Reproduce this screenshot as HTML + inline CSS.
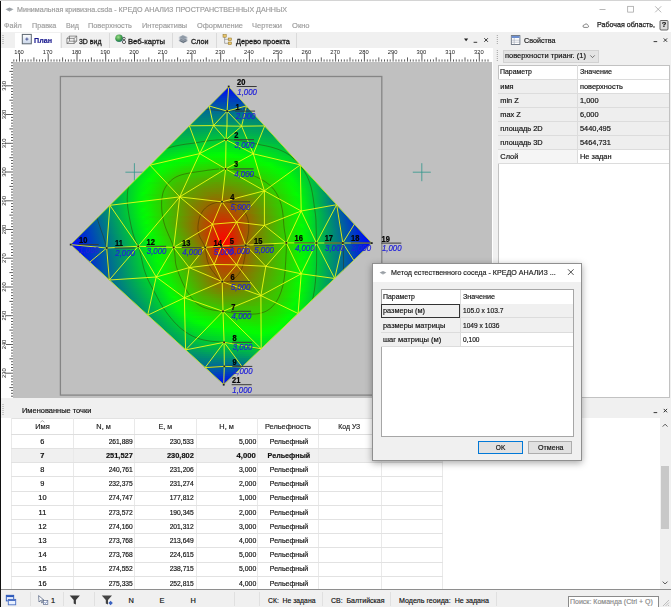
<!DOCTYPE html>
<html><head><meta charset="utf-8"><title>КРЕДО АНАЛИЗ ПРОСТРАНСТВЕННЫХ ДАННЫХ</title>
<style>
html,body{margin:0;padding:0;}
body{width:671px;height:607px;overflow:hidden;background:#fff;position:relative;font-family:"Liberation Sans", sans-serif;}
.b{position:absolute;box-sizing:border-box;}
.t{position:absolute;white-space:pre;line-height:10px;font-family:"Liberation Sans", sans-serif;}
svg{position:absolute;left:0;top:0;overflow:visible;}
#w{position:absolute;left:0;top:0;width:671px;height:607px;overflow:hidden;filter:blur(0.3px);}
</style></head><body><div id="w">
<div class="b" style="left:0px;top:0px;width:671px;height:1px;background:#d4d4d4;"></div>
<span class="t " style="left:17.0px;top:4.6px;font-size:7.7px;color:#9b9b9b;transform:scaleX(0.926);transform-origin:left center;-webkit-text-stroke:0.18px #9b9b9b;">Минимальная кривизна.csda - КРЕДО АНАЛИЗ ПРОСТРАНСТВЕННЫХ ДАННЫХ</span>
<svg width="671" height="607"><path d="M5.5 9.2 L9.5 7.6 L13.5 9.2 L9.5 10.8 Z" fill="#9aa0a6"/><path d="M5.5 9.2 L9.5 10.8 L13.5 9.2 L9.5 11.6 Z" fill="#7d858c"/></svg>
<svg width="671" height="607" stroke="#9a9a9a" stroke-width="0.7" fill="none"><path d="M599.5 9.5h6"/><rect x="627.7" y="6.3" width="5.8" height="5.8"/><path d="M655.2 6.3l6 6M661.2 6.3l-6 6"/></svg>
<span class="t " style="left:4.2px;top:21.0px;font-size:7.7px;color:#9d9d9d;transform:scaleX(0.940);transform-origin:left center;-webkit-text-stroke:0.18px #9d9d9d;">Файл</span>
<span class="t " style="left:32.0px;top:21.0px;font-size:7.7px;color:#9d9d9d;transform:scaleX(0.934);transform-origin:left center;-webkit-text-stroke:0.18px #9d9d9d;">Правка</span>
<span class="t " style="left:66.0px;top:21.0px;font-size:7.7px;color:#9d9d9d;transform:scaleX(0.933);transform-origin:left center;-webkit-text-stroke:0.18px #9d9d9d;">Вид</span>
<span class="t " style="left:88.3px;top:21.0px;font-size:7.7px;color:#9d9d9d;transform:scaleX(0.955);transform-origin:left center;-webkit-text-stroke:0.18px #9d9d9d;">Поверхность</span>
<span class="t " style="left:142.2px;top:21.0px;font-size:7.7px;color:#9d9d9d;transform:scaleX(0.962);transform-origin:left center;-webkit-text-stroke:0.18px #9d9d9d;">Интерактивы</span>
<span class="t " style="left:197.0px;top:21.0px;font-size:7.7px;color:#9d9d9d;transform:scaleX(0.962);transform-origin:left center;-webkit-text-stroke:0.18px #9d9d9d;">Оформление</span>
<span class="t " style="left:252.4px;top:21.0px;font-size:7.7px;color:#9d9d9d;transform:scaleX(0.977);transform-origin:left center;-webkit-text-stroke:0.18px #9d9d9d;">Чертежи</span>
<span class="t " style="left:292.0px;top:21.0px;font-size:7.7px;color:#9d9d9d;transform:scaleX(0.983);transform-origin:left center;-webkit-text-stroke:0.18px #9d9d9d;">Окно</span>
<span class="t " style="left:597.0px;top:20.4px;font-size:7.7px;color:#1a1a1a;transform:scaleX(0.921);transform-origin:left center;-webkit-text-stroke:0.25px #1a1a1a;">Рабочая область,</span>
<svg width="671" height="607"><path d="M584 27.400h3.800a1.100 1.100 0 0 0 0-2.100a1.800 1.800 0 0 0-3.400-.3a1.200 1.200 0 0 0-.4 2.400z" fill="none" stroke="#555" stroke-width="0.7"/><rect x="660" y="20.5" width="8" height="9.5" rx="1" fill="#dcdcdc" stroke="#444" stroke-width="0.8"/></svg>
<span class="t " style="left:661.7px;top:20.4px;font-size:7.5px;color:#111;-webkit-text-stroke:0.18px #111;font-weight:700;">?</span>
<div class="b" style="left:1px;top:32px;width:491.6px;height:15.6px;background:#f0f0f0;"></div>
<div class="b" style="left:14.8px;top:32.6px;width:45.6px;height:15px;background:#fff;"></div>
<svg width="671" height="607"><path d="M3 35v10" stroke="#9a9a9a" stroke-width="1" stroke-dasharray="1 1"/></svg>
<span class="t " style="left:34.0px;top:36.4px;font-size:7.7px;color:#1b1b8f;transform:scaleX(0.930);transform-origin:left center;-webkit-text-stroke:0.18px #1b1b8f;font-weight:700;">План</span>
<span class="t " style="left:79.0px;top:36.6px;font-size:7.7px;color:#1a1a1a;transform:scaleX(0.905);transform-origin:left center;-webkit-text-stroke:0.3px #1a1a1a;">3D вид</span>
<span class="t " style="left:128.0px;top:36.6px;font-size:7.7px;color:#1a1a1a;transform:scaleX(0.992);transform-origin:left center;-webkit-text-stroke:0.3px #1a1a1a;">Веб-карты</span>
<span class="t " style="left:191.3px;top:36.6px;font-size:7.7px;color:#1a1a1a;transform:scaleX(0.934);transform-origin:left center;-webkit-text-stroke:0.3px #1a1a1a;">Слои</span>
<span class="t " style="left:236.0px;top:36.6px;font-size:7.7px;color:#1a1a1a;transform:scaleX(0.953);transform-origin:left center;-webkit-text-stroke:0.3px #1a1a1a;">Дерево проекта</span>
<div class="b" style="left:60.6px;top:33px;width:0.8px;height:14.5px;background:#dadada;"></div>
<div class="b" style="left:108.6px;top:33px;width:0.8px;height:14.5px;background:#dadada;"></div>
<div class="b" style="left:172px;top:33px;width:0.8px;height:14.5px;background:#dadada;"></div>
<div class="b" style="left:216px;top:33px;width:0.8px;height:14.5px;background:#dadada;"></div>
<div class="b" style="left:295.5px;top:33px;width:0.8px;height:14.5px;background:#dadada;"></div>
<svg width="671" height="607">
<defs><linearGradient id="pl" x1="0" y1="0" x2="0" y2="1"><stop offset="0" stop-color="#fff"/><stop offset="1" stop-color="#c9d6ea"/></linearGradient>
<radialGradient id="gl" cx="0.4" cy="0.35" r="0.7"><stop offset="0" stop-color="#9fe08a"/><stop offset="0.6" stop-color="#3d9a4a"/><stop offset="1" stop-color="#2b6f7a"/></radialGradient></defs>
<rect x="22.3" y="34.4" width="9" height="9.4" fill="url(#pl)" stroke="#5c6670" stroke-width="1"/>
<path d="M25.3 39.100h3.200M26.900 37.500v3.200" stroke="#33408a" stroke-width="0.8"/>
<g fill="none" stroke="#505050" stroke-width="0.6"><path d="M66.900 38.400h7.200v5.100h-7.200zM69.500 36.100h7.200v5.100h-7.200zM66.900 38.400l2.600-2.300M74.100 38.400l2.600-2.300M66.900 43.500l2.600-2.300M74.100 43.500l2.600-2.300"/></g>
<circle cx="119.100" cy="38.300" r="3.800" fill="url(#gl)"/>
<circle cx="124" cy="38.500" r="1.200" fill="#fff" stroke="#222" stroke-width="0.700"/><circle cx="124" cy="42" r="1.600" fill="#fff" stroke="#222" stroke-width="0.700"/>
<g stroke="#e8ecf0" stroke-width="0.3"><path d="M178.600 40.800l4.300-2.200 5 2.200-4.600 2.400z" fill="#5f6b78"/><path d="M178.600 39l4.300-2.200 5 2.200-4.600 2.400z" fill="#7a8592"/><path d="M178.600 37.200l4.300-2.200 5 2.200-4.600 2.400z" fill="#8f9aa6"/></g>
<g><rect x="223" y="34.6" width="3.2" height="2.6" fill="#e9c66a" stroke="#8a6d1c" stroke-width="0.5"/><rect x="228.2" y="38" width="3.2" height="2.6" fill="#e9c66a" stroke="#8a6d1c" stroke-width="0.5"/><rect x="228.2" y="42" width="3.2" height="2.6" fill="#e9c66a" stroke="#8a6d1c" stroke-width="0.5"/><path d="M224.6 37.2v6.1h3.6M224.6 39.3h3.6" fill="none" stroke="#666" stroke-width="0.5"/></g>
</svg>
<svg width="671" height="607"><path d="M464 38.6h4.2l-2.1 2.6z" fill="#222"/><path d="M473.6 42.3h3.6" stroke="#222" stroke-width="0.9"/><path d="M484.3 38.2l3.6 3.6M487.9 38.2l-3.6 3.6" stroke="#222" stroke-width="0.9"/></svg>
<div class="b" style="left:492.6px;top:32px;width:178.4px;height:366px;background:#f0f0f0;"></div>
<svg width="671" height="607"><path d="M497.300 35v10M497.300 50v12" stroke="#a0a0a0" stroke-width="1" stroke-dasharray="1 1"/></svg>
<svg width="671" height="607"><rect x="511.3" y="35.6" width="8.6" height="8.8" fill="#fff" stroke="#56606e" stroke-width="0.8"/><rect x="511.7" y="36" width="7.8" height="2" fill="#6d8fd0"/><path d="M514.2 38v6.2M511.5 40.2h8.2M511.5 42.2h8.2" stroke="#8e98a8" stroke-width="0.5"/></svg>
<span class="t " style="left:524.0px;top:35.6px;font-size:7.7px;color:#111;transform:scaleX(0.932);transform-origin:left center;-webkit-text-stroke:0.18px #111;">Свойства</span>
<svg width="671" height="607"><path d="M653.6 41.6h3.6" stroke="#222" stroke-width="0.9"/><path d="M663.7 38.4l3.4 3.4M667.1 38.4l-3.400 3.4" stroke="#222" stroke-width="0.9"/></svg>
<div class="b" style="left:502.7px;top:49.6px;width:96.5px;height:13.6px;background:#e4e4e4;border:0.8px solid #d2d2d2;"></div>
<span class="t " style="left:505.4px;top:51.4px;font-size:7.7px;color:#111;transform:scaleX(0.972);transform-origin:left center;-webkit-text-stroke:0.18px #111;">поверхности трианг. (1)</span>
<svg width="671" height="607"><path d="M590.3 55.4l2.2 2.2l2.2-2.2" fill="none" stroke="#444" stroke-width="0.7"/></svg>
<div class="b" style="left:497.5px;top:64.6px;width:172px;height:333px;background:#fff;border:0.8px solid #c2c2c2;"></div>
<span class="t " style="left:500.3px;top:67.4px;font-size:7.7px;color:#111;transform:scaleX(0.901);transform-origin:left center;-webkit-text-stroke:0.18px #111;">Параметр</span>
<span class="t " style="left:580.0px;top:67.4px;font-size:7.7px;color:#111;transform:scaleX(0.937);transform-origin:left center;-webkit-text-stroke:0.18px #111;">Значение</span>
<div class="b" style="left:498.3px;top:79px;width:170.4px;height:0.8px;background:#dcdcdc;"></div>
<div class="b" style="left:498.3px;top:79.6px;width:78.7px;height:14.0px;background:#eeeeee;"></div>
<div class="b" style="left:498.3px;top:93.1px;width:170.4px;height:0.7px;background:#dcdcdc;"></div>
<span class="t " style="left:500.3px;top:81.7px;font-size:7.4px;color:#111;-webkit-text-stroke:0.18px #111;">имя</span>
<span class="t " style="left:580.0px;top:81.7px;font-size:7.4px;color:#111;-webkit-text-stroke:0.18px #111;">поверхность</span>
<div class="b" style="left:498.3px;top:93.6px;width:78.7px;height:14.0px;background:#eeeeee;"></div>
<div class="b" style="left:577.6px;top:93.6px;width:91px;height:14.0px;background:#eeeeee;"></div>
<div class="b" style="left:498.3px;top:107.1px;width:170.4px;height:0.7px;background:#dcdcdc;"></div>
<span class="t " style="left:500.3px;top:95.7px;font-size:7.4px;color:#111;-webkit-text-stroke:0.18px #111;">min Z</span>
<span class="t " style="left:580.0px;top:95.7px;font-size:7.4px;color:#111;-webkit-text-stroke:0.18px #111;">1,000</span>
<div class="b" style="left:498.3px;top:107.6px;width:78.7px;height:14.0px;background:#eeeeee;"></div>
<div class="b" style="left:577.6px;top:107.6px;width:91px;height:14.0px;background:#eeeeee;"></div>
<div class="b" style="left:498.3px;top:121.1px;width:170.4px;height:0.7px;background:#dcdcdc;"></div>
<span class="t " style="left:500.3px;top:109.7px;font-size:7.4px;color:#111;-webkit-text-stroke:0.18px #111;">max Z</span>
<span class="t " style="left:580.0px;top:109.7px;font-size:7.4px;color:#111;-webkit-text-stroke:0.18px #111;">6,000</span>
<div class="b" style="left:498.3px;top:121.6px;width:78.7px;height:14.0px;background:#eeeeee;"></div>
<div class="b" style="left:577.6px;top:121.6px;width:91px;height:14.0px;background:#eeeeee;"></div>
<div class="b" style="left:498.3px;top:135.1px;width:170.4px;height:0.7px;background:#dcdcdc;"></div>
<span class="t " style="left:500.3px;top:123.7px;font-size:7.4px;color:#111;-webkit-text-stroke:0.18px #111;">площадь 2D</span>
<span class="t " style="left:580.0px;top:123.7px;font-size:7.4px;color:#111;-webkit-text-stroke:0.18px #111;">5440,495</span>
<div class="b" style="left:498.3px;top:135.6px;width:78.7px;height:14.0px;background:#eeeeee;"></div>
<div class="b" style="left:577.6px;top:135.6px;width:91px;height:14.0px;background:#eeeeee;"></div>
<div class="b" style="left:498.3px;top:149.1px;width:170.4px;height:0.7px;background:#dcdcdc;"></div>
<span class="t " style="left:500.3px;top:137.7px;font-size:7.4px;color:#111;-webkit-text-stroke:0.18px #111;">площадь 3D</span>
<span class="t " style="left:580.0px;top:137.7px;font-size:7.4px;color:#111;-webkit-text-stroke:0.18px #111;">5464,731</span>
<div class="b" style="left:498.3px;top:149.6px;width:78.7px;height:14.0px;background:#f5f5f5;"></div>
<div class="b" style="left:498.3px;top:163.1px;width:170.4px;height:0.7px;background:#dcdcdc;"></div>
<span class="t " style="left:500.3px;top:151.7px;font-size:7.4px;color:#111;-webkit-text-stroke:0.18px #111;">Слой</span>
<span class="t " style="left:580.0px;top:151.7px;font-size:7.4px;color:#111;-webkit-text-stroke:0.18px #111;">Не задан</span>
<div class="b" style="left:577px;top:65.4px;width:0.8px;height:98.2px;background:#dcdcdc;"></div>
<div class="b" style="left:1px;top:397.6px;width:670px;height:21px;background:#f0f0f0;"></div>
<div class="b" style="left:1px;top:418.2px;width:670px;height:171.2px;background:#fff;"></div>
<svg width="671" height="607"><path d="M3 404v12" stroke="#a0a0a0" stroke-width="1" stroke-dasharray="1 1"/></svg>
<span class="t " style="left:21.8px;top:405.8px;font-size:7.7px;color:#111;transform:scaleX(0.970);transform-origin:left center;-webkit-text-stroke:0.18px #111;">Именованные точки</span>
<svg width="671" height="607"><path d="M653.6 412.6h3.6" stroke="#222" stroke-width="0.9"/><path d="M663.7 408.9l3.4 3.4M667.1 408.9l-3.400 3.4" stroke="#222" stroke-width="0.9"/></svg>
<div class="b" style="left:11.2px;top:418.3px;width:431.5px;height:0.8px;background:#e2e2e2;"></div>
<div class="b" style="left:11.6px;top:448.4px;width:430.6px;height:14.2px;background:#f0f0f0;"></div>
<div class="b" style="left:11.2px;top:418.3px;width:0.8px;height:171.2px;background:#e9e9e9;"></div>
<div class="b" style="left:72.8px;top:418.3px;width:0.8px;height:171.2px;background:#e9e9e9;"></div>
<div class="b" style="left:134.2px;top:418.3px;width:0.8px;height:171.2px;background:#e9e9e9;"></div>
<div class="b" style="left:195.6px;top:418.3px;width:0.8px;height:171.2px;background:#e9e9e9;"></div>
<div class="b" style="left:256.6px;top:418.3px;width:0.8px;height:171.2px;background:#e9e9e9;"></div>
<div class="b" style="left:318px;top:418.3px;width:0.8px;height:171.2px;background:#e9e9e9;"></div>
<div class="b" style="left:380.6px;top:418.3px;width:0.8px;height:171.2px;background:#e9e9e9;"></div>
<div class="b" style="left:442.2px;top:418.3px;width:0.8px;height:171.2px;background:#e9e9e9;"></div>
<div class="b" style="left:11.2px;top:433.8px;width:431.5px;height:0.8px;background:#dedede;"></div>
<div class="b" style="left:11.2px;top:448.0px;width:431.5px;height:0.8px;background:#e2e2e2;"></div>
<div class="b" style="left:11.2px;top:462.2px;width:431.5px;height:0.8px;background:#e2e2e2;"></div>
<div class="b" style="left:11.2px;top:476.4px;width:431.5px;height:0.8px;background:#e2e2e2;"></div>
<div class="b" style="left:11.2px;top:490.6px;width:431.5px;height:0.8px;background:#e2e2e2;"></div>
<div class="b" style="left:11.2px;top:504.8px;width:431.5px;height:0.8px;background:#e2e2e2;"></div>
<div class="b" style="left:11.2px;top:519.0px;width:431.5px;height:0.8px;background:#e2e2e2;"></div>
<div class="b" style="left:11.2px;top:533.2px;width:431.5px;height:0.8px;background:#e2e2e2;"></div>
<div class="b" style="left:11.2px;top:547.4px;width:431.5px;height:0.8px;background:#e2e2e2;"></div>
<div class="b" style="left:11.2px;top:561.6px;width:431.5px;height:0.8px;background:#e2e2e2;"></div>
<div class="b" style="left:11.2px;top:575.8000000000001px;width:431.5px;height:0.8px;background:#e2e2e2;"></div>
<span class="t " style="left:34.7px;top:422.3px;font-size:7.7px;color:#222;transform:scaleX(0.966);transform-origin:center center;-webkit-text-stroke:0.18px #222;">Имя</span>
<span class="t " style="left:95.9px;top:422.3px;font-size:7.7px;color:#222;transform:scaleX(0.958);transform-origin:center center;-webkit-text-stroke:0.18px #222;">N, м</span>
<span class="t " style="left:157.6px;top:422.3px;font-size:7.7px;color:#222;transform:scaleX(0.918);transform-origin:center center;-webkit-text-stroke:0.18px #222;">E, м</span>
<span class="t " style="left:218.9px;top:422.3px;font-size:7.7px;color:#222;transform:scaleX(0.958);transform-origin:center center;-webkit-text-stroke:0.18px #222;">H, м</span>
<span class="t " style="left:263.5px;top:422.3px;font-size:7.7px;color:#222;transform:scaleX(0.961);transform-origin:center center;-webkit-text-stroke:0.18px #222;">Рельефность</span>
<span class="t " style="left:337.0px;top:422.3px;font-size:7.7px;color:#222;transform:scaleX(0.894);transform-origin:center center;-webkit-text-stroke:0.18px #222;">Код УЗ</span>
<svg width="671" height="607"><path d="M40.4 422.2l2-1.6l2 1.6" fill="none" stroke="#777" stroke-width="0.6"/></svg>
<span class="t " style="left:40.3px;top:436.5px;font-size:7.4px;color:#111;-webkit-text-stroke:0.18px #111;">6</span>
<span class="t " style="left:104.6px;top:436.5px;font-size:7.7px;color:#111;transform:scaleX(0.869);transform-origin:right center;-webkit-text-stroke:0.18px #111;">261,889</span>
<span class="t " style="left:166.2px;top:436.5px;font-size:7.7px;color:#111;transform:scaleX(0.869);transform-origin:right center;-webkit-text-stroke:0.18px #111;">230,533</span>
<span class="t " style="left:236.5px;top:436.5px;font-size:7.7px;color:#111;transform:scaleX(0.898);transform-origin:right center;-webkit-text-stroke:0.18px #111;">5,000</span>
<span class="t " style="left:267.5px;top:436.5px;font-size:7.7px;color:#111;transform:scaleX(0.916);transform-origin:center center;-webkit-text-stroke:0.18px #111;">Рельефный</span>
<span class="t " style="left:40.3px;top:450.7px;font-size:7.4px;color:#111;-webkit-text-stroke:0.18px #111;font-weight:700;">7</span>
<span class="t " style="left:104.6px;top:450.7px;font-size:7.7px;color:#111;transform:scaleX(0.965);transform-origin:right center;-webkit-text-stroke:0.18px #111;font-weight:700;">251,527</span>
<span class="t " style="left:166.2px;top:450.7px;font-size:7.7px;color:#111;transform:scaleX(0.965);transform-origin:right center;-webkit-text-stroke:0.18px #111;font-weight:700;">230,802</span>
<span class="t " style="left:236.5px;top:450.7px;font-size:7.7px;color:#111;-webkit-text-stroke:0.18px #111;font-weight:700;">4,000</span>
<span class="t " style="left:265.6px;top:450.7px;font-size:7.7px;color:#111;transform:scaleX(0.932);transform-origin:center center;-webkit-text-stroke:0.18px #111;font-weight:700;">Рельефный</span>
<span class="t " style="left:40.3px;top:464.9px;font-size:7.4px;color:#111;-webkit-text-stroke:0.18px #111;">8</span>
<span class="t " style="left:104.6px;top:464.9px;font-size:7.7px;color:#111;transform:scaleX(0.869);transform-origin:right center;-webkit-text-stroke:0.18px #111;">240,761</span>
<span class="t " style="left:166.2px;top:464.9px;font-size:7.7px;color:#111;transform:scaleX(0.869);transform-origin:right center;-webkit-text-stroke:0.18px #111;">231,206</span>
<span class="t " style="left:236.5px;top:464.9px;font-size:7.7px;color:#111;transform:scaleX(0.898);transform-origin:right center;-webkit-text-stroke:0.18px #111;">3,000</span>
<span class="t " style="left:267.5px;top:464.9px;font-size:7.7px;color:#111;transform:scaleX(0.916);transform-origin:center center;-webkit-text-stroke:0.18px #111;">Рельефный</span>
<span class="t " style="left:40.3px;top:479.1px;font-size:7.4px;color:#111;-webkit-text-stroke:0.18px #111;">9</span>
<span class="t " style="left:104.6px;top:479.1px;font-size:7.7px;color:#111;transform:scaleX(0.869);transform-origin:right center;-webkit-text-stroke:0.18px #111;">232,375</span>
<span class="t " style="left:166.2px;top:479.1px;font-size:7.7px;color:#111;transform:scaleX(0.869);transform-origin:right center;-webkit-text-stroke:0.18px #111;">231,274</span>
<span class="t " style="left:236.5px;top:479.1px;font-size:7.7px;color:#111;transform:scaleX(0.898);transform-origin:right center;-webkit-text-stroke:0.18px #111;">2,000</span>
<span class="t " style="left:267.5px;top:479.1px;font-size:7.7px;color:#111;transform:scaleX(0.916);transform-origin:center center;-webkit-text-stroke:0.18px #111;">Рельефный</span>
<span class="t " style="left:38.3px;top:493.3px;font-size:7.4px;color:#111;-webkit-text-stroke:0.18px #111;">10</span>
<span class="t " style="left:104.6px;top:493.3px;font-size:7.7px;color:#111;transform:scaleX(0.869);transform-origin:right center;-webkit-text-stroke:0.18px #111;">274,747</span>
<span class="t " style="left:166.2px;top:493.3px;font-size:7.7px;color:#111;transform:scaleX(0.869);transform-origin:right center;-webkit-text-stroke:0.18px #111;">177,812</span>
<span class="t " style="left:236.5px;top:493.3px;font-size:7.7px;color:#111;transform:scaleX(0.898);transform-origin:right center;-webkit-text-stroke:0.18px #111;">1,000</span>
<span class="t " style="left:267.5px;top:493.3px;font-size:7.7px;color:#111;transform:scaleX(0.916);transform-origin:center center;-webkit-text-stroke:0.18px #111;">Рельефный</span>
<span class="t " style="left:38.6px;top:507.5px;font-size:7.4px;color:#111;-webkit-text-stroke:0.18px #111;">11</span>
<span class="t " style="left:104.6px;top:507.5px;font-size:7.7px;color:#111;transform:scaleX(0.869);transform-origin:right center;-webkit-text-stroke:0.18px #111;">273,572</span>
<span class="t " style="left:166.2px;top:507.5px;font-size:7.7px;color:#111;transform:scaleX(0.869);transform-origin:right center;-webkit-text-stroke:0.18px #111;">190,345</span>
<span class="t " style="left:236.5px;top:507.5px;font-size:7.7px;color:#111;transform:scaleX(0.898);transform-origin:right center;-webkit-text-stroke:0.18px #111;">2,000</span>
<span class="t " style="left:267.5px;top:507.5px;font-size:7.7px;color:#111;transform:scaleX(0.916);transform-origin:center center;-webkit-text-stroke:0.18px #111;">Рельефный</span>
<span class="t " style="left:38.3px;top:521.7px;font-size:7.4px;color:#111;-webkit-text-stroke:0.18px #111;">12</span>
<span class="t " style="left:104.6px;top:521.7px;font-size:7.7px;color:#111;transform:scaleX(0.869);transform-origin:right center;-webkit-text-stroke:0.18px #111;">274,160</span>
<span class="t " style="left:166.2px;top:521.7px;font-size:7.7px;color:#111;transform:scaleX(0.869);transform-origin:right center;-webkit-text-stroke:0.18px #111;">201,312</span>
<span class="t " style="left:236.5px;top:521.7px;font-size:7.7px;color:#111;transform:scaleX(0.898);transform-origin:right center;-webkit-text-stroke:0.18px #111;">3,000</span>
<span class="t " style="left:267.5px;top:521.7px;font-size:7.7px;color:#111;transform:scaleX(0.916);transform-origin:center center;-webkit-text-stroke:0.18px #111;">Рельефный</span>
<span class="t " style="left:38.3px;top:535.9px;font-size:7.4px;color:#111;-webkit-text-stroke:0.18px #111;">13</span>
<span class="t " style="left:104.6px;top:535.9px;font-size:7.7px;color:#111;transform:scaleX(0.869);transform-origin:right center;-webkit-text-stroke:0.18px #111;">273,768</span>
<span class="t " style="left:166.2px;top:535.9px;font-size:7.7px;color:#111;transform:scaleX(0.869);transform-origin:right center;-webkit-text-stroke:0.18px #111;">213,649</span>
<span class="t " style="left:236.5px;top:535.9px;font-size:7.7px;color:#111;transform:scaleX(0.898);transform-origin:right center;-webkit-text-stroke:0.18px #111;">4,000</span>
<span class="t " style="left:267.5px;top:535.9px;font-size:7.7px;color:#111;transform:scaleX(0.916);transform-origin:center center;-webkit-text-stroke:0.18px #111;">Рельефный</span>
<span class="t " style="left:38.3px;top:550.1px;font-size:7.4px;color:#111;-webkit-text-stroke:0.18px #111;">14</span>
<span class="t " style="left:104.6px;top:550.1px;font-size:7.7px;color:#111;transform:scaleX(0.869);transform-origin:right center;-webkit-text-stroke:0.18px #111;">273,768</span>
<span class="t " style="left:166.2px;top:550.1px;font-size:7.7px;color:#111;transform:scaleX(0.869);transform-origin:right center;-webkit-text-stroke:0.18px #111;">224,615</span>
<span class="t " style="left:236.5px;top:550.1px;font-size:7.7px;color:#111;transform:scaleX(0.898);transform-origin:right center;-webkit-text-stroke:0.18px #111;">5,000</span>
<span class="t " style="left:267.5px;top:550.1px;font-size:7.7px;color:#111;transform:scaleX(0.916);transform-origin:center center;-webkit-text-stroke:0.18px #111;">Рельефный</span>
<span class="t " style="left:38.3px;top:564.3px;font-size:7.4px;color:#111;-webkit-text-stroke:0.18px #111;">15</span>
<span class="t " style="left:104.6px;top:564.3px;font-size:7.7px;color:#111;transform:scaleX(0.869);transform-origin:right center;-webkit-text-stroke:0.18px #111;">274,552</span>
<span class="t " style="left:166.2px;top:564.3px;font-size:7.7px;color:#111;transform:scaleX(0.869);transform-origin:right center;-webkit-text-stroke:0.18px #111;">238,715</span>
<span class="t " style="left:236.5px;top:564.3px;font-size:7.7px;color:#111;transform:scaleX(0.898);transform-origin:right center;-webkit-text-stroke:0.18px #111;">5,000</span>
<span class="t " style="left:267.5px;top:564.3px;font-size:7.7px;color:#111;transform:scaleX(0.916);transform-origin:center center;-webkit-text-stroke:0.18px #111;">Рельефный</span>
<span class="t " style="left:38.3px;top:578.5px;font-size:7.4px;color:#111;-webkit-text-stroke:0.18px #111;">16</span>
<span class="t " style="left:104.6px;top:578.5px;font-size:7.7px;color:#111;transform:scaleX(0.869);transform-origin:right center;-webkit-text-stroke:0.18px #111;">275,335</span>
<span class="t " style="left:166.2px;top:578.5px;font-size:7.7px;color:#111;transform:scaleX(0.869);transform-origin:right center;-webkit-text-stroke:0.18px #111;">252,815</span>
<span class="t " style="left:236.5px;top:578.5px;font-size:7.7px;color:#111;transform:scaleX(0.898);transform-origin:right center;-webkit-text-stroke:0.18px #111;">4,000</span>
<span class="t " style="left:267.5px;top:578.5px;font-size:7.7px;color:#111;transform:scaleX(0.916);transform-origin:center center;-webkit-text-stroke:0.18px #111;">Рельефный</span>
<div class="b" style="left:659.6px;top:418.3px;width:11px;height:171.2px;background:#f0f0f0;"></div>
<div class="b" style="left:661px;top:466.4px;width:8px;height:63px;background:#c8c8c8;"></div>
<svg width="671" height="607"><path d="M662.7 426.6l2.4-2.4l2.4 2.4M662.7 581.6l2.4 2.4l2.4-2.4" fill="none" stroke="#444" stroke-width="0.9"/></svg>
<div class="b" style="left:1px;top:589px;width:670px;height:0.9px;background:#8e8e8e;"></div>
<div class="b" style="left:1px;top:589.9px;width:670px;height:17.1px;background:#f0f0f0;"></div>
<div class="b" style="left:29.6px;top:592px;width:0.8px;height:14px;background:#e0e0e0;"></div>
<div class="b" style="left:63px;top:592px;width:0.8px;height:14px;background:#e0e0e0;"></div>
<div class="b" style="left:94px;top:592px;width:0.8px;height:14px;background:#e0e0e0;"></div>
<div class="b" style="left:234px;top:592px;width:0.8px;height:14px;background:#e0e0e0;"></div>
<div class="b" style="left:259px;top:592px;width:0.8px;height:14px;background:#e0e0e0;"></div>
<div class="b" style="left:322px;top:592px;width:0.8px;height:14px;background:#e0e0e0;"></div>
<div class="b" style="left:389.6px;top:592px;width:0.8px;height:14px;background:#e0e0e0;"></div>
<div class="b" style="left:496px;top:592px;width:0.8px;height:14px;background:#e0e0e0;"></div>
<span class="t " style="left:51.1px;top:596.0px;font-size:7.4px;color:#111;-webkit-text-stroke:0.18px #111;">1</span>
<span class="t " style="left:128.6px;top:596.2px;font-size:7.4px;color:#111;-webkit-text-stroke:0.18px #111;">N</span>
<span class="t " style="left:159.5px;top:596.2px;font-size:7.4px;color:#111;-webkit-text-stroke:0.18px #111;">E</span>
<span class="t " style="left:190.6px;top:596.2px;font-size:7.4px;color:#111;-webkit-text-stroke:0.18px #111;">H</span>
<span class="t " style="left:268.2px;top:596.2px;font-size:7.7px;color:#111;transform:scaleX(0.887);transform-origin:left center;-webkit-text-stroke:0.18px #111;">СК:  Не задана</span>
<span class="t " style="left:330.7px;top:596.2px;font-size:7.7px;color:#111;transform:scaleX(0.908);transform-origin:left center;-webkit-text-stroke:0.18px #111;">СВ:  Балтийская</span>
<span class="t " style="left:399.2px;top:596.2px;font-size:7.7px;color:#111;transform:scaleX(0.922);transform-origin:left center;-webkit-text-stroke:0.18px #111;">Модель геоида:  Не задана</span>
<div class="b" style="left:568px;top:595.8px;width:91px;height:12px;background:#fff;border:0.8px solid #8a8a8a;"></div>
<span class="t " style="left:570.3px;top:596.6px;font-size:7.7px;color:#8a8a8a;transform:scaleX(0.912);transform-origin:left center;-webkit-text-stroke:0.18px #8a8a8a;">Поиск: Команда (Ctrl + Q)</span>
<svg width="671" height="607">
<rect x="6.3" y="595.3" width="7.4" height="5.6" fill="#e8f0ff" stroke="#2a56b8" stroke-width="0.9"/><rect x="6.3" y="595.3" width="7.4" height="1.8" fill="#2a56b8"/>
<rect x="8.3" y="599.4" width="7.4" height="5.4" fill="#e8f0ff" stroke="#4a6fc4" stroke-width="0.9"/><rect x="8.3" y="599.4" width="7.4" height="1.6" fill="#4a6fc4"/>
<path d="M38.6 595.6l0.4 6.4l1.6-1.6l1.2 2.6l1-.5l-1.2-2.5h2.2z" fill="#fff" stroke="#4a5a7a" stroke-width="0.7"/>
<rect x="43.6" y="600.6" width="4.2" height="3.8" fill="#fff" stroke="#5a6a8a" stroke-width="0.7"/><path d="M44.5 602.4l.9 1l1.6-1.9" fill="none" stroke="#2d4ea0" stroke-width="0.7"/>
<path d="M69.700 595.600h10.200l-4 4.300v4.700l-2.200-1.200v-3.500z" fill="#3a3a3a"/>
<path d="M101.800 595.600h10.200l-4 4.300v4.700l-2.200-1.200v-3.500z" fill="#444"/><path d="M110.600 600.800l2.200 2.200l-2.200 2.200l-2.200-2.200z" fill="#3a62c0"/>
<path d="M663 606l6-6M665.500 606l3.5-3.5M668 606l1-1" stroke="#b0b0b0" stroke-width="0.8"/>
</svg>
<div class="b" style="left:0px;top:1px;width:1.2px;height:606px;background:#111;"></div>
<div class="b" style="left:1.2px;top:47.6px;width:490.6px;height:14.4px;background:#fff;"></div>
<div class="b" style="left:1.2px;top:61.8px;width:11.8px;height:335.8px;background:#fff;"></div>
<div class="b" style="left:13px;top:61.6px;width:478.8px;height:336px;background:#c0c0c0;"></div>
<svg width="671" height="607">
<path d="M13.8 59.4V61.6M16.6 59.4V61.6M19.5 53.6V61.6M22.4 59.4V61.6M25.2 59.4V61.6M28.1 59.4V61.6M31.0 59.4V61.6M33.9 57.4V61.6M36.7 59.4V61.6M39.6 59.4V61.6M42.5 59.4V61.6M45.4 59.4V61.6M48.2 53.6V61.6M51.1 59.4V61.6M54.0 59.4V61.6M56.9 59.4V61.6M59.7 59.4V61.6M62.6 57.4V61.6M65.5 59.4V61.6M68.4 59.4V61.6M71.2 59.4V61.6M74.1 59.4V61.6M77.0 53.6V61.6M79.9 59.4V61.6M82.7 59.4V61.6M85.6 59.4V61.6M88.5 59.4V61.6M91.4 57.4V61.6M94.2 59.4V61.6M97.1 59.4V61.6M100.0 59.4V61.6M102.8 59.4V61.6M105.7 53.6V61.6M108.6 59.4V61.6M111.5 59.4V61.6M114.3 59.4V61.6M117.2 59.4V61.6M120.1 57.4V61.6M123.0 59.4V61.6M125.8 59.4V61.6M128.7 59.4V61.6M131.6 59.4V61.6M134.5 53.6V61.6M137.3 59.4V61.6M140.2 59.4V61.6M143.1 59.4V61.6M146.0 59.4V61.6M148.8 57.4V61.6M151.7 59.4V61.6M154.6 59.4V61.6M157.5 59.4V61.6M160.3 59.4V61.6M163.2 53.6V61.6M166.1 59.4V61.6M168.9 59.4V61.6M171.8 59.4V61.6M174.7 59.4V61.6M177.6 57.4V61.6M180.4 59.4V61.6M183.3 59.4V61.6M186.2 59.4V61.6M189.1 59.4V61.6M191.9 53.6V61.6M194.8 59.4V61.6M197.7 59.4V61.6M200.6 59.4V61.6M203.4 59.4V61.6M206.3 57.4V61.6M209.2 59.4V61.6M212.1 59.4V61.6M214.9 59.4V61.6M217.8 59.4V61.6M220.7 53.6V61.6M223.6 59.4V61.6M226.4 59.4V61.6M229.3 59.4V61.6M232.2 59.4V61.6M235.1 57.4V61.6M237.9 59.4V61.6M240.8 59.4V61.6M243.7 59.4V61.6M246.5 59.4V61.6M249.4 53.6V61.6M252.3 59.4V61.6M255.2 59.4V61.6M258.0 59.4V61.6M260.9 59.4V61.6M263.8 57.4V61.6M266.7 59.4V61.6M269.5 59.4V61.6M272.4 59.4V61.6M275.3 59.4V61.6M278.2 53.6V61.6M281.0 59.4V61.6M283.9 59.4V61.6M286.8 59.4V61.6M289.7 59.4V61.6M292.5 57.4V61.6M295.4 59.4V61.6M298.3 59.4V61.6M301.2 59.4V61.6M304.0 59.4V61.6M306.9 53.6V61.6M309.8 59.4V61.6M312.6 59.4V61.6M315.5 59.4V61.6M318.4 59.4V61.6M321.3 57.4V61.6M324.1 59.4V61.6M327.0 59.4V61.6M329.9 59.4V61.6M332.8 59.4V61.6M335.6 53.6V61.6M338.5 59.4V61.6M341.4 59.4V61.6M344.3 59.4V61.6M347.1 59.4V61.6M350.0 57.4V61.6M352.9 59.4V61.6M355.8 59.4V61.6M358.6 59.4V61.6M361.5 59.4V61.6M364.4 53.6V61.6M367.3 59.4V61.6M370.1 59.4V61.6M373.0 59.4V61.6M375.9 59.4V61.6M378.8 57.4V61.6M381.6 59.4V61.6M384.5 59.4V61.6M387.4 59.4V61.6M390.2 59.4V61.6M393.1 53.6V61.6M396.0 59.4V61.6M398.9 59.4V61.6M401.7 59.4V61.6M404.6 59.4V61.6M407.5 57.4V61.6M410.4 59.4V61.6M413.2 59.4V61.6M416.1 59.4V61.6M419.0 59.4V61.6M421.9 53.6V61.6M424.7 59.4V61.6M427.6 59.4V61.6M430.5 59.4V61.6M433.4 59.4V61.6M436.2 57.4V61.6M439.1 59.4V61.6M442.0 59.4V61.6M444.9 59.4V61.6M447.7 59.4V61.6M450.6 53.6V61.6M453.5 59.4V61.6M456.3 59.4V61.6M459.2 59.4V61.6M462.1 59.4V61.6M465.0 57.4V61.6M467.8 59.4V61.6M470.7 59.4V61.6M473.6 59.4V61.6M476.5 59.4V61.6M479.3 53.6V61.6M482.2 59.4V61.6M485.1 59.4V61.6M488.0 59.4V61.6M11.0 396.2H13M11.0 393.3H13M11.0 390.4H13M9.4 387.6H13M11.0 384.7H13M11.0 381.8H13M11.0 378.9H13M11.0 376.1H13M5.8 373.2H13M11.0 370.3H13M11.0 367.5H13M11.0 364.6H13M11.0 361.7H13M9.4 358.8H13M11.0 356.0H13M11.0 353.1H13M11.0 350.2H13M11.0 347.3H13M5.8 344.5H13M11.0 341.6H13M11.0 338.7H13M11.0 335.8H13M11.0 333.0H13M9.4 330.1H13M11.0 327.2H13M11.0 324.3H13M11.0 321.5H13M11.0 318.6H13M5.8 315.7H13M11.0 312.8H13M11.0 310.0H13M11.0 307.1H13M11.0 304.2H13M9.4 301.4H13M11.0 298.5H13M11.0 295.6H13M11.0 292.7H13M11.0 289.9H13M5.8 287.0H13M11.0 284.1H13M11.0 281.2H13M11.0 278.4H13M11.0 275.5H13M9.4 272.6H13M11.0 269.7H13M11.0 266.9H13M11.0 264.0H13M11.0 261.1H13M5.8 258.2H13M11.0 255.4H13M11.0 252.5H13M11.0 249.6H13M11.0 246.7H13M9.4 243.9H13M11.0 241.0H13M11.0 238.1H13M11.0 235.2H13M11.0 232.4H13M5.8 229.5H13M11.0 226.6H13M11.0 223.8H13M11.0 220.9H13M11.0 218.0H13M9.4 215.1H13M11.0 212.3H13M11.0 209.4H13M11.0 206.5H13M11.0 203.6H13M5.8 200.8H13M11.0 197.9H13M11.0 195.0H13M11.0 192.1H13M11.0 189.3H13M9.4 186.4H13M11.0 183.5H13M11.0 180.6H13M11.0 177.8H13M11.0 174.9H13M5.8 172.0H13M11.0 169.1H13M11.0 166.3H13M11.0 163.4H13M11.0 160.5H13M9.4 157.7H13M11.0 154.8H13M11.0 151.9H13M11.0 149.0H13M11.0 146.2H13M5.8 143.3H13M11.0 140.4H13M11.0 137.5H13M11.0 134.7H13M11.0 131.8H13M9.4 128.9H13M11.0 126.0H13M11.0 123.2H13M11.0 120.3H13M11.0 117.4H13M5.8 114.5H13M11.0 111.7H13M11.0 108.8H13M11.0 105.9H13M11.0 103.0H13M9.4 100.2H13M11.0 97.3H13M11.0 94.4H13M11.0 91.5H13M11.0 88.7H13M5.8 85.8H13M11.0 82.9H13M11.0 80.1H13M11.0 77.2H13M11.0 74.3H13M9.4 71.4H13M11.0 68.6H13M11.0 65.7H13M11.0 62.8H13" stroke="#333" stroke-width="0.8" fill="none"/>
<g font-size="5.8" fill="#222" text-anchor="middle">
<text x="19.0" y="53.9">160</text>
<text x="47.7" y="53.9">170</text>
<text x="76.5" y="53.9">180</text>
<text x="105.2" y="53.9">190</text>
<text x="134.0" y="53.9">200</text>
<text x="162.7" y="53.9">210</text>
<text x="191.4" y="53.9">220</text>
<text x="220.2" y="53.9">230</text>
<text x="248.9" y="53.9">240</text>
<text x="277.7" y="53.9">250</text>
<text x="306.4" y="53.9">260</text>
<text x="335.1" y="53.9">270</text>
<text x="363.9" y="53.9">280</text>
<text x="392.6" y="53.9">290</text>
<text x="421.4" y="53.9">300</text>
<text x="450.1" y="53.9">310</text>
<text x="478.8" y="53.9">320</text>
<text transform="translate(5.8 373.2) rotate(-90)">230</text>
<text transform="translate(5.8 344.5) rotate(-90)">240</text>
<text transform="translate(5.8 315.7) rotate(-90)">250</text>
<text transform="translate(5.8 287.0) rotate(-90)">260</text>
<text transform="translate(5.8 258.2) rotate(-90)">270</text>
<text transform="translate(5.8 229.5) rotate(-90)">280</text>
<text transform="translate(5.8 200.8) rotate(-90)">290</text>
<text transform="translate(5.8 172.0) rotate(-90)">300</text>
<text transform="translate(5.8 143.3) rotate(-90)">310</text>
<text transform="translate(5.8 114.5) rotate(-90)">320</text>
<text transform="translate(5.8 85.8) rotate(-90)">330</text>
</g>
<rect x="60.4" y="76.5" width="321.4" height="318.6" fill="none" stroke="#858585" stroke-width="1.3"/>
<path d="M125.4 172.2h18M134.4 163.2v18" stroke="#2f958a" stroke-width="0.8" fill="none"/>
<path d="M412.8 172.2h18M421.8 163.2v18" stroke="#2f958a" stroke-width="0.8" fill="none"/>
<defs><clipPath id="dm"><polygon points="228.7,86.5 371.8,243.1 223.7,384.7 70.5,244.6"/></clipPath><linearGradient id="h0" gradientUnits="userSpaceOnUse" x1="226.2" x2="231.1" y1="0" y2="0"><stop offset="0.000" stop-color="#0002fd"/><stop offset="1.000" stop-color="#0003fc"/></linearGradient><linearGradient id="h1" gradientUnits="userSpaceOnUse" x1="224.2" x2="232.9" y1="0" y2="0"><stop offset="0.000" stop-color="#000bf4"/><stop offset="1.000" stop-color="#000bf4"/></linearGradient><linearGradient id="h2" gradientUnits="userSpaceOnUse" x1="222.2" x2="234.7" y1="0" y2="0"><stop offset="0.000" stop-color="#0014eb"/><stop offset="1.000" stop-color="#0015ea"/></linearGradient><linearGradient id="h3" gradientUnits="userSpaceOnUse" x1="220.2" x2="236.6" y1="0" y2="0"><stop offset="0.000" stop-color="#001de2"/><stop offset="1.000" stop-color="#001ee1"/></linearGradient><linearGradient id="h4" gradientUnits="userSpaceOnUse" x1="218.2" x2="238.4" y1="0" y2="0"><stop offset="0.000" stop-color="#0026d9"/><stop offset="1.000" stop-color="#0028d7"/></linearGradient><linearGradient id="h5" gradientUnits="userSpaceOnUse" x1="216.2" x2="240.2" y1="0" y2="0"><stop offset="0.000" stop-color="#0030cf"/><stop offset="1.000" stop-color="#0032cd"/></linearGradient><linearGradient id="h6" gradientUnits="userSpaceOnUse" x1="214.2" x2="242.0" y1="0" y2="0"><stop offset="0.000" stop-color="#0039c6"/><stop offset="1.000" stop-color="#003cc3"/></linearGradient><linearGradient id="h7" gradientUnits="userSpaceOnUse" x1="212.2" x2="243.9" y1="0" y2="0"><stop offset="0.000" stop-color="#0042bd"/><stop offset="0.750" stop-color="#0041be"/><stop offset="1.000" stop-color="#0046b9"/></linearGradient><linearGradient id="h8" gradientUnits="userSpaceOnUse" x1="210.2" x2="245.7" y1="0" y2="0"><stop offset="0.000" stop-color="#004cb3"/><stop offset="0.750" stop-color="#004ab5"/><stop offset="1.000" stop-color="#004fb0"/></linearGradient><linearGradient id="h9" gradientUnits="userSpaceOnUse" x1="208.2" x2="247.5" y1="0" y2="0"><stop offset="0.000" stop-color="#0054ab"/><stop offset="0.600" stop-color="#004fb0"/><stop offset="1.000" stop-color="#0058a7"/></linearGradient><linearGradient id="h10" gradientUnits="userSpaceOnUse" x1="206.2" x2="249.3" y1="0" y2="0"><stop offset="0.000" stop-color="#005da2"/><stop offset="0.600" stop-color="#0057a8"/><stop offset="1.000" stop-color="#00609f"/></linearGradient><linearGradient id="h11" gradientUnits="userSpaceOnUse" x1="204.2" x2="251.2" y1="0" y2="0"><stop offset="0.000" stop-color="#00649b"/><stop offset="0.667" stop-color="#00619e"/><stop offset="1.000" stop-color="#006897"/></linearGradient><linearGradient id="h12" gradientUnits="userSpaceOnUse" x1="202.2" x2="253.0" y1="0" y2="0"><stop offset="0.000" stop-color="#006b94"/><stop offset="0.667" stop-color="#006996"/><stop offset="1.000" stop-color="#006e91"/></linearGradient><linearGradient id="h13" gradientUnits="userSpaceOnUse" x1="200.2" x2="254.8" y1="0" y2="0"><stop offset="0.000" stop-color="#00718e"/><stop offset="0.714" stop-color="#00728d"/><stop offset="1.000" stop-color="#00748b"/></linearGradient><linearGradient id="h14" gradientUnits="userSpaceOnUse" x1="198.2" x2="256.7" y1="0" y2="0"><stop offset="0.000" stop-color="#007788"/><stop offset="1.000" stop-color="#007a85"/></linearGradient><linearGradient id="h15" gradientUnits="userSpaceOnUse" x1="196.2" x2="258.5" y1="0" y2="0"><stop offset="0.000" stop-color="#007c83"/><stop offset="1.000" stop-color="#007f80"/></linearGradient><linearGradient id="h16" gradientUnits="userSpaceOnUse" x1="194.2" x2="260.3" y1="0" y2="0"><stop offset="0.000" stop-color="#00827d"/><stop offset="1.000" stop-color="#00847b"/></linearGradient><linearGradient id="h17" gradientUnits="userSpaceOnUse" x1="192.2" x2="262.1" y1="0" y2="0"><stop offset="0.000" stop-color="#008778"/><stop offset="0.889" stop-color="#008d72"/><stop offset="1.000" stop-color="#008877"/></linearGradient><linearGradient id="h18" gradientUnits="userSpaceOnUse" x1="190.2" x2="264.0" y1="0" y2="0"><stop offset="0.000" stop-color="#008c73"/><stop offset="0.778" stop-color="#00946b"/><stop offset="1.000" stop-color="#008d72"/></linearGradient><linearGradient id="h19" gradientUnits="userSpaceOnUse" x1="188.2" x2="265.8" y1="0" y2="0"><stop offset="0.000" stop-color="#00916e"/><stop offset="0.700" stop-color="#009b64"/><stop offset="1.000" stop-color="#00916e"/></linearGradient><linearGradient id="h20" gradientUnits="userSpaceOnUse" x1="186.2" x2="267.6" y1="0" y2="0"><stop offset="0.000" stop-color="#009669"/><stop offset="0.600" stop-color="#00a15e"/><stop offset="1.000" stop-color="#009669"/></linearGradient><linearGradient id="h21" gradientUnits="userSpaceOnUse" x1="184.2" x2="269.4" y1="0" y2="0"><stop offset="0.000" stop-color="#009b64"/><stop offset="0.545" stop-color="#00a857"/><stop offset="1.000" stop-color="#009a65"/></linearGradient><linearGradient id="h22" gradientUnits="userSpaceOnUse" x1="182.2" x2="271.3" y1="0" y2="0"><stop offset="0.000" stop-color="#00a05f"/><stop offset="0.545" stop-color="#00af50"/><stop offset="1.000" stop-color="#009e61"/></linearGradient><linearGradient id="h23" gradientUnits="userSpaceOnUse" x1="180.2" x2="273.1" y1="0" y2="0"><stop offset="0.000" stop-color="#00a55a"/><stop offset="0.500" stop-color="#00b54a"/><stop offset="1.000" stop-color="#00a25d"/></linearGradient><linearGradient id="h24" gradientUnits="userSpaceOnUse" x1="178.2" x2="274.9" y1="0" y2="0"><stop offset="0.000" stop-color="#00aa55"/><stop offset="0.500" stop-color="#00bc43"/><stop offset="1.000" stop-color="#00a659"/></linearGradient><linearGradient id="h25" gradientUnits="userSpaceOnUse" x1="176.2" x2="276.8" y1="0" y2="0"><stop offset="0.000" stop-color="#00af50"/><stop offset="0.538" stop-color="#00c33c"/><stop offset="1.000" stop-color="#00aa55"/></linearGradient><linearGradient id="h26" gradientUnits="userSpaceOnUse" x1="174.2" x2="278.6" y1="0" y2="0"><stop offset="0.000" stop-color="#00b44b"/><stop offset="0.538" stop-color="#00c936"/><stop offset="1.000" stop-color="#00ae51"/></linearGradient><linearGradient id="h27" gradientUnits="userSpaceOnUse" x1="172.2" x2="280.4" y1="0" y2="0"><stop offset="0.000" stop-color="#00b946"/><stop offset="0.500" stop-color="#00d02f"/><stop offset="1.000" stop-color="#00b24d"/></linearGradient><linearGradient id="h28" gradientUnits="userSpaceOnUse" x1="170.2" x2="282.2" y1="0" y2="0"><stop offset="0.000" stop-color="#00be41"/><stop offset="0.500" stop-color="#00d728"/><stop offset="1.000" stop-color="#00b649"/></linearGradient><linearGradient id="h29" gradientUnits="userSpaceOnUse" x1="168.2" x2="284.1" y1="0" y2="0"><stop offset="0.000" stop-color="#00c33c"/><stop offset="0.500" stop-color="#00de21"/><stop offset="0.929" stop-color="#00c23d"/><stop offset="1.000" stop-color="#00b946"/></linearGradient><linearGradient id="h30" gradientUnits="userSpaceOnUse" x1="166.2" x2="285.9" y1="0" y2="0"><stop offset="0.000" stop-color="#00c738"/><stop offset="0.467" stop-color="#00e51a"/><stop offset="0.867" stop-color="#00cd32"/><stop offset="1.000" stop-color="#00bc43"/></linearGradient><linearGradient id="h31" gradientUnits="userSpaceOnUse" x1="164.2" x2="287.7" y1="0" y2="0"><stop offset="0.000" stop-color="#00cb34"/><stop offset="0.400" stop-color="#00ea15"/><stop offset="0.667" stop-color="#00e31c"/><stop offset="1.000" stop-color="#00bf40"/></linearGradient><linearGradient id="h32" gradientUnits="userSpaceOnUse" x1="162.2" x2="289.6" y1="0" y2="0"><stop offset="0.000" stop-color="#00cf30"/><stop offset="0.375" stop-color="#00f00f"/><stop offset="0.625" stop-color="#00ed12"/><stop offset="0.938" stop-color="#00cd32"/><stop offset="1.000" stop-color="#00c13e"/></linearGradient><linearGradient id="h33" gradientUnits="userSpaceOnUse" x1="160.2" x2="291.4" y1="0" y2="0"><stop offset="0.000" stop-color="#00d32c"/><stop offset="0.250" stop-color="#00ee11"/><stop offset="0.500" stop-color="#00fa05"/><stop offset="0.875" stop-color="#00d926"/><stop offset="1.000" stop-color="#00c33c"/></linearGradient><linearGradient id="h34" gradientUnits="userSpaceOnUse" x1="158.2" x2="293.2" y1="0" y2="0"><stop offset="0.000" stop-color="#00d629"/><stop offset="0.235" stop-color="#00f40b"/><stop offset="0.529" stop-color="#01fe00"/><stop offset="0.824" stop-color="#00e41b"/><stop offset="1.000" stop-color="#00c53a"/></linearGradient><linearGradient id="h35" gradientUnits="userSpaceOnUse" x1="156.2" x2="295.0" y1="0" y2="0"><stop offset="0.000" stop-color="#00d926"/><stop offset="0.235" stop-color="#00fb04"/><stop offset="0.412" stop-color="#07f800"/><stop offset="0.647" stop-color="#00fe01"/><stop offset="0.941" stop-color="#00d52a"/><stop offset="1.000" stop-color="#00c639"/></linearGradient><linearGradient id="h36" gradientUnits="userSpaceOnUse" x1="154.2" x2="296.9" y1="0" y2="0"><stop offset="0.000" stop-color="#00db24"/><stop offset="0.167" stop-color="#00fb04"/><stop offset="0.389" stop-color="#0df200"/><stop offset="0.556" stop-color="#0ef100"/><stop offset="0.722" stop-color="#00fb04"/><stop offset="0.944" stop-color="#00d629"/><stop offset="1.000" stop-color="#00c639"/></linearGradient><linearGradient id="h37" gradientUnits="userSpaceOnUse" x1="152.2" x2="298.7" y1="0" y2="0"><stop offset="0.000" stop-color="#00dd22"/><stop offset="0.167" stop-color="#01fe00"/><stop offset="0.500" stop-color="#17e800"/><stop offset="0.722" stop-color="#02fd00"/><stop offset="0.889" stop-color="#00e619"/><stop offset="1.000" stop-color="#00c639"/></linearGradient><linearGradient id="h38" gradientUnits="userSpaceOnUse" x1="150.2" x2="300.5" y1="0" y2="0"><stop offset="0.000" stop-color="#00de21"/><stop offset="0.105" stop-color="#00fa05"/><stop offset="0.474" stop-color="#1ee100"/><stop offset="0.684" stop-color="#0df200"/><stop offset="0.789" stop-color="#00fc03"/><stop offset="0.947" stop-color="#00d827"/><stop offset="1.000" stop-color="#00c53a"/></linearGradient><linearGradient id="h39" gradientUnits="userSpaceOnUse" x1="148.1" x2="302.3" y1="0" y2="0"><stop offset="0.000" stop-color="#00df20"/><stop offset="0.105" stop-color="#00fe01"/><stop offset="0.316" stop-color="#1ce300"/><stop offset="0.526" stop-color="#25da00"/><stop offset="0.789" stop-color="#01fe00"/><stop offset="0.947" stop-color="#00d926"/><stop offset="1.000" stop-color="#00c53a"/></linearGradient><linearGradient id="h40" gradientUnits="userSpaceOnUse" x1="146.1" x2="304.2" y1="0" y2="0"><stop offset="0.000" stop-color="#00df20"/><stop offset="0.100" stop-color="#00ff00"/><stop offset="0.250" stop-color="#1de200"/><stop offset="0.500" stop-color="#2cd300"/><stop offset="0.750" stop-color="#0df200"/><stop offset="0.800" stop-color="#03fc00"/><stop offset="0.900" stop-color="#00e916"/><stop offset="1.000" stop-color="#00c43b"/></linearGradient><linearGradient id="h41" gradientUnits="userSpaceOnUse" x1="144.1" x2="306.0" y1="0" y2="0"><stop offset="0.000" stop-color="#00df20"/><stop offset="0.100" stop-color="#03fc00"/><stop offset="0.250" stop-color="#23dc00"/><stop offset="0.500" stop-color="#33cc00"/><stop offset="0.700" stop-color="#1be400"/><stop offset="0.800" stop-color="#07f800"/><stop offset="0.850" stop-color="#00fa05"/><stop offset="1.000" stop-color="#00c33c"/></linearGradient><linearGradient id="h42" gradientUnits="userSpaceOnUse" x1="142.1" x2="307.8" y1="0" y2="0"><stop offset="0.000" stop-color="#00de21"/><stop offset="0.095" stop-color="#03fc00"/><stop offset="0.238" stop-color="#27d800"/><stop offset="0.524" stop-color="#39c600"/><stop offset="0.762" stop-color="#13ec00"/><stop offset="0.857" stop-color="#00fa05"/><stop offset="1.000" stop-color="#00c13e"/></linearGradient><linearGradient id="h43" gradientUnits="userSpaceOnUse" x1="140.1" x2="309.7" y1="0" y2="0"><stop offset="0.000" stop-color="#00dc23"/><stop offset="0.095" stop-color="#04fb00"/><stop offset="0.238" stop-color="#2dd200"/><stop offset="0.476" stop-color="#41be00"/><stop offset="0.619" stop-color="#34cb00"/><stop offset="0.857" stop-color="#00fc03"/><stop offset="1.000" stop-color="#00bf40"/></linearGradient><linearGradient id="h44" gradientUnits="userSpaceOnUse" x1="138.1" x2="311.5" y1="0" y2="0"><stop offset="0.000" stop-color="#00da25"/><stop offset="0.091" stop-color="#03fc00"/><stop offset="0.227" stop-color="#30cf00"/><stop offset="0.500" stop-color="#47b800"/><stop offset="0.682" stop-color="#2dd200"/><stop offset="0.864" stop-color="#00fb04"/><stop offset="1.000" stop-color="#00bc43"/></linearGradient><linearGradient id="h45" gradientUnits="userSpaceOnUse" x1="136.1" x2="313.3" y1="0" y2="0"><stop offset="0.000" stop-color="#00d827"/><stop offset="0.091" stop-color="#03fc00"/><stop offset="0.227" stop-color="#34cb00"/><stop offset="0.500" stop-color="#4eb100"/><stop offset="0.682" stop-color="#32cd00"/><stop offset="0.864" stop-color="#00fc03"/><stop offset="1.000" stop-color="#00b847"/></linearGradient><linearGradient id="h46" gradientUnits="userSpaceOnUse" x1="134.1" x2="315.1" y1="0" y2="0"><stop offset="0.000" stop-color="#00d52a"/><stop offset="0.087" stop-color="#00ff00"/><stop offset="0.217" stop-color="#34cb00"/><stop offset="0.435" stop-color="#52ad00"/><stop offset="0.565" stop-color="#4fb000"/><stop offset="0.783" stop-color="#1be400"/><stop offset="0.870" stop-color="#00fa05"/><stop offset="1.000" stop-color="#00b44b"/></linearGradient><linearGradient id="h47" gradientUnits="userSpaceOnUse" x1="132.1" x2="317.0" y1="0" y2="0"><stop offset="0.000" stop-color="#00d22d"/><stop offset="0.087" stop-color="#00fe01"/><stop offset="0.217" stop-color="#36c900"/><stop offset="0.391" stop-color="#55aa00"/><stop offset="0.522" stop-color="#5aa500"/><stop offset="0.696" stop-color="#38c700"/><stop offset="0.870" stop-color="#00fa05"/><stop offset="1.000" stop-color="#00b04f"/></linearGradient><linearGradient id="h48" gradientUnits="userSpaceOnUse" x1="130.1" x2="318.8" y1="0" y2="0"><stop offset="0.000" stop-color="#00ce31"/><stop offset="0.083" stop-color="#00fa05"/><stop offset="0.250" stop-color="#42bd00"/><stop offset="0.458" stop-color="#619e00"/><stop offset="0.583" stop-color="#58a700"/><stop offset="0.792" stop-color="#1ce300"/><stop offset="0.833" stop-color="#0bf400"/><stop offset="0.875" stop-color="#00f708"/><stop offset="1.000" stop-color="#00ab54"/></linearGradient><linearGradient id="h49" gradientUnits="userSpaceOnUse" x1="128.1" x2="320.6" y1="0" y2="0"><stop offset="0.000" stop-color="#00ca35"/><stop offset="0.083" stop-color="#00f807"/><stop offset="0.125" stop-color="#0ff000"/><stop offset="0.250" stop-color="#44bb00"/><stop offset="0.458" stop-color="#679800"/><stop offset="0.583" stop-color="#5ea100"/><stop offset="0.792" stop-color="#1de200"/><stop offset="0.833" stop-color="#0bf400"/><stop offset="0.875" stop-color="#00f609"/><stop offset="1.000" stop-color="#00a55a"/></linearGradient><linearGradient id="h50" gradientUnits="userSpaceOnUse" x1="126.1" x2="322.4" y1="0" y2="0"><stop offset="0.000" stop-color="#00c53a"/><stop offset="0.080" stop-color="#00f30c"/><stop offset="0.120" stop-color="#0af500"/><stop offset="0.240" stop-color="#42bd00"/><stop offset="0.400" stop-color="#669900"/><stop offset="0.520" stop-color="#6d9200"/><stop offset="0.640" stop-color="#55aa00"/><stop offset="0.840" stop-color="#08f700"/><stop offset="0.880" stop-color="#00f20d"/><stop offset="1.000" stop-color="#009f60"/></linearGradient><linearGradient id="h51" gradientUnits="userSpaceOnUse" x1="124.1" x2="324.3" y1="0" y2="0"><stop offset="0.000" stop-color="#00c03f"/><stop offset="0.080" stop-color="#00f00f"/><stop offset="0.120" stop-color="#08f700"/><stop offset="0.240" stop-color="#43bc00"/><stop offset="0.400" stop-color="#6c9300"/><stop offset="0.520" stop-color="#738c00"/><stop offset="0.640" stop-color="#59a600"/><stop offset="0.840" stop-color="#08f700"/><stop offset="0.880" stop-color="#00f10e"/><stop offset="1.000" stop-color="#009867"/></linearGradient><linearGradient id="h52" gradientUnits="userSpaceOnUse" x1="122.1" x2="326.1" y1="0" y2="0"><stop offset="0.000" stop-color="#00bb44"/><stop offset="0.080" stop-color="#00ec13"/><stop offset="0.120" stop-color="#05fa00"/><stop offset="0.240" stop-color="#44bb00"/><stop offset="0.400" stop-color="#718e00"/><stop offset="0.520" stop-color="#798600"/><stop offset="0.640" stop-color="#5da200"/><stop offset="0.840" stop-color="#07f800"/><stop offset="0.880" stop-color="#00ef10"/><stop offset="1.000" stop-color="#00926d"/></linearGradient><linearGradient id="h53" gradientUnits="userSpaceOnUse" x1="120.1" x2="327.9" y1="0" y2="0"><stop offset="0.000" stop-color="#00b54a"/><stop offset="0.115" stop-color="#00fe01"/><stop offset="0.269" stop-color="#4fb000"/><stop offset="0.423" stop-color="#7a8500"/><stop offset="0.538" stop-color="#7d8200"/><stop offset="0.654" stop-color="#5ca300"/><stop offset="0.846" stop-color="#02fd00"/><stop offset="0.923" stop-color="#00cd32"/><stop offset="1.000" stop-color="#008a75"/></linearGradient><linearGradient id="h54" gradientUnits="userSpaceOnUse" x1="118.1" x2="329.8" y1="0" y2="0"><stop offset="0.000" stop-color="#00b04f"/><stop offset="0.115" stop-color="#00fa05"/><stop offset="0.192" stop-color="#2ad500"/><stop offset="0.308" stop-color="#5ea100"/><stop offset="0.462" stop-color="#847b00"/><stop offset="0.577" stop-color="#7a8500"/><stop offset="0.769" stop-color="#2bd400"/><stop offset="0.846" stop-color="#00ff00"/><stop offset="0.962" stop-color="#00a758"/><stop offset="1.000" stop-color="#00837c"/></linearGradient><linearGradient id="h55" gradientUnits="userSpaceOnUse" x1="116.1" x2="331.6" y1="0" y2="0"><stop offset="0.000" stop-color="#00aa55"/><stop offset="0.111" stop-color="#00f30c"/><stop offset="0.148" stop-color="#0cf300"/><stop offset="0.296" stop-color="#5ba400"/><stop offset="0.444" stop-color="#877800"/><stop offset="0.556" stop-color="#857a00"/><stop offset="0.704" stop-color="#4cb300"/><stop offset="0.815" stop-color="#12ed00"/><stop offset="0.852" stop-color="#00fa05"/><stop offset="0.963" stop-color="#009f60"/><stop offset="1.000" stop-color="#007b84"/></linearGradient><linearGradient id="h56" gradientUnits="userSpaceOnUse" x1="114.1" x2="333.4" y1="0" y2="0"><stop offset="0.000" stop-color="#00a35c"/><stop offset="0.111" stop-color="#00ef10"/><stop offset="0.148" stop-color="#08f700"/><stop offset="0.296" stop-color="#5ba400"/><stop offset="0.444" stop-color="#8c7300"/><stop offset="0.519" stop-color="#906f00"/><stop offset="0.630" stop-color="#708f00"/><stop offset="0.815" stop-color="#10ef00"/><stop offset="0.852" stop-color="#00f708"/><stop offset="0.963" stop-color="#009867"/><stop offset="1.000" stop-color="#00748b"/></linearGradient><linearGradient id="h57" gradientUnits="userSpaceOnUse" x1="112.1" x2="335.2" y1="0" y2="0"><stop offset="0.000" stop-color="#009d62"/><stop offset="0.143" stop-color="#00ff00"/><stop offset="0.286" stop-color="#56a900"/><stop offset="0.429" stop-color="#8d7200"/><stop offset="0.500" stop-color="#976800"/><stop offset="0.571" stop-color="#8b7400"/><stop offset="0.750" stop-color="#34cb00"/><stop offset="0.821" stop-color="#0af500"/><stop offset="0.857" stop-color="#00f10e"/><stop offset="0.964" stop-color="#00906f"/><stop offset="1.000" stop-color="#006c93"/></linearGradient><linearGradient id="h58" gradientUnits="userSpaceOnUse" x1="110.1" x2="337.1" y1="0" y2="0"><stop offset="0.000" stop-color="#009669"/><stop offset="0.143" stop-color="#00fb04"/><stop offset="0.321" stop-color="#669900"/><stop offset="0.429" stop-color="#926d00"/><stop offset="0.500" stop-color="#9c6300"/><stop offset="0.571" stop-color="#8f7000"/><stop offset="0.750" stop-color="#34cb00"/><stop offset="0.821" stop-color="#08f700"/><stop offset="0.857" stop-color="#00ee11"/><stop offset="1.000" stop-color="#00659a"/></linearGradient><linearGradient id="h59" gradientUnits="userSpaceOnUse" x1="108.1" x2="338.9" y1="0" y2="0"><stop offset="0.000" stop-color="#008f70"/><stop offset="0.138" stop-color="#00f30c"/><stop offset="0.172" stop-color="#0cf300"/><stop offset="0.345" stop-color="#728d00"/><stop offset="0.448" stop-color="#9b6400"/><stop offset="0.517" stop-color="#a15e00"/><stop offset="0.586" stop-color="#8e7100"/><stop offset="0.828" stop-color="#02fd00"/><stop offset="0.897" stop-color="#00c837"/><stop offset="1.000" stop-color="#005ea1"/></linearGradient><linearGradient id="h60" gradientUnits="userSpaceOnUse" x1="106.1" x2="340.7" y1="0" y2="0"><stop offset="0.000" stop-color="#008877"/><stop offset="0.138" stop-color="#00ee11"/><stop offset="0.172" stop-color="#08f700"/><stop offset="0.345" stop-color="#728d00"/><stop offset="0.448" stop-color="#a05f00"/><stop offset="0.517" stop-color="#a75800"/><stop offset="0.586" stop-color="#926d00"/><stop offset="0.828" stop-color="#00fe01"/><stop offset="0.931" stop-color="#009f60"/><stop offset="1.000" stop-color="#0057a8"/></linearGradient><linearGradient id="h61" gradientUnits="userSpaceOnUse" x1="104.1" x2="342.6" y1="0" y2="0"><stop offset="0.000" stop-color="#00817e"/><stop offset="0.167" stop-color="#00fe01"/><stop offset="0.367" stop-color="#7e8100"/><stop offset="0.467" stop-color="#a95600"/><stop offset="0.533" stop-color="#a95600"/><stop offset="0.633" stop-color="#7a8500"/><stop offset="0.800" stop-color="#10ef00"/><stop offset="0.833" stop-color="#00f708"/><stop offset="0.933" stop-color="#009768"/><stop offset="1.000" stop-color="#0051ae"/></linearGradient><linearGradient id="h62" gradientUnits="userSpaceOnUse" x1="102.1" x2="344.4" y1="0" y2="0"><stop offset="0.000" stop-color="#007a85"/><stop offset="0.167" stop-color="#00f906"/><stop offset="0.200" stop-color="#12ed00"/><stop offset="0.400" stop-color="#916e00"/><stop offset="0.467" stop-color="#ae5100"/><stop offset="0.533" stop-color="#ae5100"/><stop offset="0.633" stop-color="#7b8400"/><stop offset="0.800" stop-color="#0ef100"/><stop offset="0.833" stop-color="#00f40b"/><stop offset="0.933" stop-color="#00906f"/><stop offset="1.000" stop-color="#004cb3"/></linearGradient><linearGradient id="h63" gradientUnits="userSpaceOnUse" x1="100.1" x2="346.2" y1="0" y2="0"><stop offset="0.000" stop-color="#00738c"/><stop offset="0.161" stop-color="#00f00f"/><stop offset="0.194" stop-color="#09f600"/><stop offset="0.419" stop-color="#9d6200"/><stop offset="0.484" stop-color="#b74800"/><stop offset="0.548" stop-color="#ae5100"/><stop offset="0.774" stop-color="#1ee100"/><stop offset="0.806" stop-color="#07f800"/><stop offset="0.839" stop-color="#00ed12"/><stop offset="1.000" stop-color="#0046b9"/></linearGradient><linearGradient id="h64" gradientUnits="userSpaceOnUse" x1="98.1" x2="348.0" y1="0" y2="0"><stop offset="0.000" stop-color="#006b94"/><stop offset="0.161" stop-color="#00ea15"/><stop offset="0.194" stop-color="#04fb00"/><stop offset="0.452" stop-color="#b14e00"/><stop offset="0.484" stop-color="#bc4300"/><stop offset="0.516" stop-color="#bc4300"/><stop offset="0.581" stop-color="#a15e00"/><stop offset="0.806" stop-color="#04fb00"/><stop offset="0.839" stop-color="#00e916"/><stop offset="1.000" stop-color="#0041be"/></linearGradient><linearGradient id="h65" gradientUnits="userSpaceOnUse" x1="96.1" x2="349.9" y1="0" y2="0"><stop offset="0.000" stop-color="#00649b"/><stop offset="0.187" stop-color="#00fa05"/><stop offset="0.250" stop-color="#2ad500"/><stop offset="0.437" stop-color="#ad5200"/><stop offset="0.500" stop-color="#c33c00"/><stop offset="0.562" stop-color="#af5000"/><stop offset="0.812" stop-color="#00fc03"/><stop offset="0.906" stop-color="#009e61"/><stop offset="1.000" stop-color="#003cc3"/></linearGradient><linearGradient id="h66" gradientUnits="userSpaceOnUse" x1="94.1" x2="351.7" y1="0" y2="0"><stop offset="0.000" stop-color="#005ca3"/><stop offset="0.188" stop-color="#00f40b"/><stop offset="0.219" stop-color="#0ef100"/><stop offset="0.469" stop-color="#c13e00"/><stop offset="0.500" stop-color="#c83700"/><stop offset="0.531" stop-color="#c23d00"/><stop offset="0.625" stop-color="#837c00"/><stop offset="0.781" stop-color="#12ed00"/><stop offset="0.812" stop-color="#00f906"/><stop offset="0.906" stop-color="#009867"/><stop offset="1.000" stop-color="#0037c8"/></linearGradient><linearGradient id="h67" gradientUnits="userSpaceOnUse" x1="92.1" x2="353.5" y1="0" y2="0"><stop offset="0.000" stop-color="#0053ac"/><stop offset="0.182" stop-color="#00eb14"/><stop offset="0.212" stop-color="#04fb00"/><stop offset="0.455" stop-color="#bd4200"/><stop offset="0.485" stop-color="#cb3400"/><stop offset="0.515" stop-color="#cc3300"/><stop offset="0.576" stop-color="#aa5500"/><stop offset="0.788" stop-color="#0bf400"/><stop offset="0.818" stop-color="#00f10e"/><stop offset="1.000" stop-color="#0032cd"/></linearGradient><linearGradient id="h68" gradientUnits="userSpaceOnUse" x1="90.1" x2="355.3" y1="0" y2="0"><stop offset="0.000" stop-color="#004bb4"/><stop offset="0.212" stop-color="#00fe01"/><stop offset="0.455" stop-color="#c03f00"/><stop offset="0.485" stop-color="#d02f00"/><stop offset="0.515" stop-color="#d12e00"/><stop offset="0.576" stop-color="#ac5300"/><stop offset="0.788" stop-color="#08f700"/><stop offset="0.818" stop-color="#00ed12"/><stop offset="1.000" stop-color="#002dd2"/></linearGradient><linearGradient id="h69" gradientUnits="userSpaceOnUse" x1="88.1" x2="357.2" y1="0" y2="0"><stop offset="0.000" stop-color="#0043bc"/><stop offset="0.206" stop-color="#00f40b"/><stop offset="0.235" stop-color="#0cf300"/><stop offset="0.412" stop-color="#9c6300"/><stop offset="0.471" stop-color="#cd3200"/><stop offset="0.500" stop-color="#d82700"/><stop offset="0.529" stop-color="#d12e00"/><stop offset="0.735" stop-color="#2dd200"/><stop offset="0.794" stop-color="#00ff00"/><stop offset="0.882" stop-color="#00a45b"/><stop offset="1.000" stop-color="#0028d7"/></linearGradient><linearGradient id="h70" gradientUnits="userSpaceOnUse" x1="86.1" x2="359.0" y1="0" y2="0"><stop offset="0.000" stop-color="#003bc4"/><stop offset="0.206" stop-color="#00ee11"/><stop offset="0.235" stop-color="#07f800"/><stop offset="0.412" stop-color="#9b6400"/><stop offset="0.471" stop-color="#d12e00"/><stop offset="0.500" stop-color="#dd2200"/><stop offset="0.529" stop-color="#d52a00"/><stop offset="0.676" stop-color="#57a800"/><stop offset="0.794" stop-color="#00fc03"/><stop offset="1.000" stop-color="#0023dc"/></linearGradient><linearGradient id="h71" gradientUnits="userSpaceOnUse" x1="84.1" x2="360.8" y1="0" y2="0"><stop offset="0.000" stop-color="#0033cc"/><stop offset="0.229" stop-color="#00fc03"/><stop offset="0.343" stop-color="#58a700"/><stop offset="0.457" stop-color="#c83700"/><stop offset="0.486" stop-color="#de2100"/><stop offset="0.514" stop-color="#e01f00"/><stop offset="0.543" stop-color="#ce3100"/><stop offset="0.657" stop-color="#649b00"/><stop offset="0.771" stop-color="#0ef100"/><stop offset="0.800" stop-color="#00f40b"/><stop offset="1.000" stop-color="#001ee1"/></linearGradient><linearGradient id="h72" gradientUnits="userSpaceOnUse" x1="82.1" x2="362.7" y1="0" y2="0"><stop offset="0.000" stop-color="#002bd4"/><stop offset="0.229" stop-color="#00f609"/><stop offset="0.257" stop-color="#0ff000"/><stop offset="0.400" stop-color="#8a7500"/><stop offset="0.486" stop-color="#e21d00"/><stop offset="0.514" stop-color="#e51a00"/><stop offset="0.543" stop-color="#d12e00"/><stop offset="0.629" stop-color="#788700"/><stop offset="0.771" stop-color="#0cf300"/><stop offset="0.800" stop-color="#00f00f"/><stop offset="1.000" stop-color="#0018e7"/></linearGradient><linearGradient id="h73" gradientUnits="userSpaceOnUse" x1="80.1" x2="364.5" y1="0" y2="0"><stop offset="0.000" stop-color="#0023dc"/><stop offset="0.222" stop-color="#00ec13"/><stop offset="0.250" stop-color="#04fb00"/><stop offset="0.389" stop-color="#7b8400"/><stop offset="0.472" stop-color="#da2500"/><stop offset="0.500" stop-color="#eb1400"/><stop offset="0.528" stop-color="#e21d00"/><stop offset="0.611" stop-color="#857a00"/><stop offset="0.778" stop-color="#03fc00"/><stop offset="0.833" stop-color="#00c936"/><stop offset="0.972" stop-color="#002ed1"/><stop offset="1.000" stop-color="#0013ec"/></linearGradient><linearGradient id="h74" gradientUnits="userSpaceOnUse" x1="78.1" x2="366.3" y1="0" y2="0"><stop offset="0.000" stop-color="#001ce3"/><stop offset="0.250" stop-color="#00fd02"/><stop offset="0.389" stop-color="#778800"/><stop offset="0.472" stop-color="#dc2300"/><stop offset="0.500" stop-color="#f00f00"/><stop offset="0.528" stop-color="#e51a00"/><stop offset="0.611" stop-color="#837c00"/><stop offset="0.778" stop-color="#00ff00"/><stop offset="1.000" stop-color="#000ef1"/></linearGradient><linearGradient id="h75" gradientUnits="userSpaceOnUse" x1="76.1" x2="368.1" y1="0" y2="0"><stop offset="0.000" stop-color="#0014eb"/><stop offset="0.243" stop-color="#00f20d"/><stop offset="0.270" stop-color="#0af500"/><stop offset="0.378" stop-color="#689700"/><stop offset="0.432" stop-color="#a45b00"/><stop offset="0.486" stop-color="#ed1200"/><stop offset="0.514" stop-color="#f30c00"/><stop offset="0.541" stop-color="#d92600"/><stop offset="0.595" stop-color="#916e00"/><stop offset="0.757" stop-color="#11ee00"/><stop offset="0.784" stop-color="#00f609"/><stop offset="0.973" stop-color="#0023dc"/><stop offset="1.000" stop-color="#0009f6"/></linearGradient><linearGradient id="h76" gradientUnits="userSpaceOnUse" x1="74.1" x2="370.0" y1="0" y2="0"><stop offset="0.000" stop-color="#000df2"/><stop offset="0.162" stop-color="#00a25d"/><stop offset="0.243" stop-color="#00ed12"/><stop offset="0.270" stop-color="#05fa00"/><stop offset="0.405" stop-color="#7f8000"/><stop offset="0.459" stop-color="#c73800"/><stop offset="0.486" stop-color="#ef1000"/><stop offset="0.514" stop-color="#f70800"/><stop offset="0.541" stop-color="#da2500"/><stop offset="0.595" stop-color="#8e7100"/><stop offset="0.757" stop-color="#0ff000"/><stop offset="0.784" stop-color="#00f30c"/><stop offset="0.973" stop-color="#001ee1"/><stop offset="1.000" stop-color="#0004fb"/></linearGradient><linearGradient id="h77" gradientUnits="userSpaceOnUse" x1="72.1" x2="371.8" y1="0" y2="0"><stop offset="0.000" stop-color="#0006f9"/><stop offset="0.162" stop-color="#009b64"/><stop offset="0.270" stop-color="#00ff00"/><stop offset="0.405" stop-color="#798600"/><stop offset="0.432" stop-color="#986700"/><stop offset="0.486" stop-color="#f10e00"/><stop offset="0.514" stop-color="#fa0500"/><stop offset="0.541" stop-color="#db2400"/><stop offset="0.595" stop-color="#8b7400"/><stop offset="0.757" stop-color="#0cf300"/><stop offset="0.784" stop-color="#00ef10"/><stop offset="0.973" stop-color="#0019e6"/><stop offset="1.000" stop-color="#0000ff"/></linearGradient><linearGradient id="h78" gradientUnits="userSpaceOnUse" x1="70.1" x2="372.7" y1="0" y2="0"><stop offset="0.000" stop-color="#0000ff"/><stop offset="0.158" stop-color="#00906f"/><stop offset="0.263" stop-color="#00f30c"/><stop offset="0.289" stop-color="#0bf400"/><stop offset="0.421" stop-color="#837c00"/><stop offset="0.447" stop-color="#a55a00"/><stop offset="0.474" stop-color="#d92600"/><stop offset="0.500" stop-color="#fe0100"/><stop offset="0.526" stop-color="#f10e00"/><stop offset="0.579" stop-color="#9d6200"/><stop offset="0.632" stop-color="#6b9400"/><stop offset="0.737" stop-color="#1fe000"/><stop offset="0.763" stop-color="#05fa00"/><stop offset="0.789" stop-color="#00e817"/><stop offset="0.974" stop-color="#0017e8"/><stop offset="1.000" stop-color="#0000ff"/></linearGradient><linearGradient id="h79" gradientUnits="userSpaceOnUse" x1="69.9" x2="371.9" y1="0" y2="0"><stop offset="0.000" stop-color="#0000ff"/><stop offset="0.158" stop-color="#008d72"/><stop offset="0.263" stop-color="#00f00f"/><stop offset="0.289" stop-color="#08f700"/><stop offset="0.421" stop-color="#7d8200"/><stop offset="0.447" stop-color="#9d6200"/><stop offset="0.474" stop-color="#d32c00"/><stop offset="0.500" stop-color="#fe0100"/><stop offset="0.526" stop-color="#f30c00"/><stop offset="0.579" stop-color="#9e6100"/><stop offset="0.632" stop-color="#6c9300"/><stop offset="0.737" stop-color="#22dd00"/><stop offset="0.763" stop-color="#08f700"/><stop offset="0.789" stop-color="#00eb14"/><stop offset="0.974" stop-color="#001ae5"/><stop offset="1.000" stop-color="#0001fe"/></linearGradient><linearGradient id="h80" gradientUnits="userSpaceOnUse" x1="71.0" x2="369.8" y1="0" y2="0"><stop offset="0.000" stop-color="#0000ff"/><stop offset="0.162" stop-color="#00916e"/><stop offset="0.270" stop-color="#00f50a"/><stop offset="0.297" stop-color="#0df200"/><stop offset="0.432" stop-color="#847b00"/><stop offset="0.459" stop-color="#ae5100"/><stop offset="0.486" stop-color="#e71800"/><stop offset="0.514" stop-color="#fd0200"/><stop offset="0.541" stop-color="#e01f00"/><stop offset="0.595" stop-color="#8d7200"/><stop offset="0.757" stop-color="#13ec00"/><stop offset="0.784" stop-color="#00f609"/><stop offset="1.000" stop-color="#0008f7"/></linearGradient><linearGradient id="h81" gradientUnits="userSpaceOnUse" x1="73.2" x2="367.7" y1="0" y2="0"><stop offset="0.000" stop-color="#0005fa"/><stop offset="0.162" stop-color="#00956a"/><stop offset="0.270" stop-color="#00f609"/><stop offset="0.297" stop-color="#0ef100"/><stop offset="0.432" stop-color="#837c00"/><stop offset="0.459" stop-color="#ad5200"/><stop offset="0.486" stop-color="#e31c00"/><stop offset="0.514" stop-color="#f80700"/><stop offset="0.541" stop-color="#de2100"/><stop offset="0.595" stop-color="#8d7200"/><stop offset="0.676" stop-color="#53ac00"/><stop offset="0.784" stop-color="#00fa05"/><stop offset="1.000" stop-color="#000ff0"/></linearGradient><linearGradient id="h82" gradientUnits="userSpaceOnUse" x1="75.4" x2="365.6" y1="0" y2="0"><stop offset="0.000" stop-color="#000af5"/><stop offset="0.278" stop-color="#00fe01"/><stop offset="0.417" stop-color="#728d00"/><stop offset="0.444" stop-color="#916e00"/><stop offset="0.500" stop-color="#ee1100"/><stop offset="0.528" stop-color="#ea1500"/><stop offset="0.583" stop-color="#9c6300"/><stop offset="0.639" stop-color="#6a9500"/><stop offset="0.750" stop-color="#20df00"/><stop offset="0.778" stop-color="#05fa00"/><stop offset="0.806" stop-color="#00e817"/><stop offset="1.000" stop-color="#0017e8"/></linearGradient><linearGradient id="h83" gradientUnits="userSpaceOnUse" x1="77.6" x2="363.5" y1="0" y2="0"><stop offset="0.000" stop-color="#000ff0"/><stop offset="0.278" stop-color="#00ff00"/><stop offset="0.417" stop-color="#728d00"/><stop offset="0.444" stop-color="#926d00"/><stop offset="0.472" stop-color="#c23d00"/><stop offset="0.500" stop-color="#e71800"/><stop offset="0.528" stop-color="#e41b00"/><stop offset="0.611" stop-color="#807f00"/><stop offset="0.750" stop-color="#23dc00"/><stop offset="0.778" stop-color="#09f600"/><stop offset="0.806" stop-color="#00ec13"/><stop offset="1.000" stop-color="#001ee1"/></linearGradient><linearGradient id="h84" gradientUnits="userSpaceOnUse" x1="79.8" x2="361.4" y1="0" y2="0"><stop offset="0.000" stop-color="#0015ea"/><stop offset="0.257" stop-color="#00ef10"/><stop offset="0.286" stop-color="#08f700"/><stop offset="0.429" stop-color="#7e8100"/><stop offset="0.486" stop-color="#d22d00"/><stop offset="0.514" stop-color="#e31c00"/><stop offset="0.543" stop-color="#d12e00"/><stop offset="0.600" stop-color="#8b7400"/><stop offset="0.771" stop-color="#13ec00"/><stop offset="0.800" stop-color="#00f609"/><stop offset="1.000" stop-color="#0026d9"/></linearGradient><linearGradient id="h85" gradientUnits="userSpaceOnUse" x1="82.0" x2="359.3" y1="0" y2="0"><stop offset="0.000" stop-color="#001ae5"/><stop offset="0.257" stop-color="#00f10e"/><stop offset="0.286" stop-color="#0af500"/><stop offset="0.429" stop-color="#7f8000"/><stop offset="0.486" stop-color="#cc3300"/><stop offset="0.514" stop-color="#dc2300"/><stop offset="0.543" stop-color="#cc3300"/><stop offset="0.600" stop-color="#8c7300"/><stop offset="0.771" stop-color="#16e900"/><stop offset="0.800" stop-color="#00fb04"/><stop offset="1.000" stop-color="#002dd2"/></linearGradient><linearGradient id="h86" gradientUnits="userSpaceOnUse" x1="84.2" x2="357.2" y1="0" y2="0"><stop offset="0.000" stop-color="#0020df"/><stop offset="0.265" stop-color="#00f906"/><stop offset="0.294" stop-color="#13ec00"/><stop offset="0.412" stop-color="#6f9000"/><stop offset="0.500" stop-color="#d12e00"/><stop offset="0.529" stop-color="#d12e00"/><stop offset="0.618" stop-color="#7e8100"/><stop offset="0.765" stop-color="#1fe000"/><stop offset="0.794" stop-color="#05fa00"/><stop offset="0.824" stop-color="#00e817"/><stop offset="1.000" stop-color="#0035ca"/></linearGradient><linearGradient id="h87" gradientUnits="userSpaceOnUse" x1="86.3" x2="355.1" y1="0" y2="0"><stop offset="0.000" stop-color="#0026d9"/><stop offset="0.265" stop-color="#00fb04"/><stop offset="0.382" stop-color="#58a700"/><stop offset="0.441" stop-color="#8e7100"/><stop offset="0.500" stop-color="#ca3500"/><stop offset="0.529" stop-color="#cb3400"/><stop offset="0.647" stop-color="#6b9400"/><stop offset="0.765" stop-color="#22dd00"/><stop offset="0.794" stop-color="#09f600"/><stop offset="0.824" stop-color="#00ed12"/><stop offset="1.000" stop-color="#003dc2"/></linearGradient><linearGradient id="h88" gradientUnits="userSpaceOnUse" x1="88.5" x2="353.0" y1="0" y2="0"><stop offset="0.000" stop-color="#002cd3"/><stop offset="0.242" stop-color="#00eb14"/><stop offset="0.273" stop-color="#04fb00"/><stop offset="0.424" stop-color="#7c8300"/><stop offset="0.485" stop-color="#ba4500"/><stop offset="0.515" stop-color="#c73800"/><stop offset="0.545" stop-color="#bc4300"/><stop offset="0.636" stop-color="#738c00"/><stop offset="0.758" stop-color="#2ad500"/><stop offset="0.788" stop-color="#12ed00"/><stop offset="0.818" stop-color="#00f609"/><stop offset="1.000" stop-color="#0044bb"/></linearGradient><linearGradient id="h89" gradientUnits="userSpaceOnUse" x1="90.7" x2="350.9" y1="0" y2="0"><stop offset="0.000" stop-color="#0032cd"/><stop offset="0.242" stop-color="#00ed12"/><stop offset="0.273" stop-color="#06f900"/><stop offset="0.424" stop-color="#7c8300"/><stop offset="0.485" stop-color="#b44b00"/><stop offset="0.515" stop-color="#c13e00"/><stop offset="0.545" stop-color="#b84700"/><stop offset="0.667" stop-color="#639c00"/><stop offset="0.788" stop-color="#15ea00"/><stop offset="0.818" stop-color="#00fa05"/><stop offset="1.000" stop-color="#004bb4"/></linearGradient><linearGradient id="h90" gradientUnits="userSpaceOnUse" x1="92.9" x2="348.8" y1="0" y2="0"><stop offset="0.000" stop-color="#0038c7"/><stop offset="0.250" stop-color="#00f40b"/><stop offset="0.281" stop-color="#0ff000"/><stop offset="0.438" stop-color="#877800"/><stop offset="0.500" stop-color="#b74800"/><stop offset="0.531" stop-color="#b94600"/><stop offset="0.781" stop-color="#1ee100"/><stop offset="0.812" stop-color="#04fb00"/><stop offset="0.844" stop-color="#00e817"/><stop offset="1.000" stop-color="#0053ac"/></linearGradient><linearGradient id="h91" gradientUnits="userSpaceOnUse" x1="95.1" x2="346.8" y1="0" y2="0"><stop offset="0.000" stop-color="#003ec1"/><stop offset="0.258" stop-color="#00fc03"/><stop offset="0.484" stop-color="#a95600"/><stop offset="0.516" stop-color="#b54a00"/><stop offset="0.548" stop-color="#ae5100"/><stop offset="0.774" stop-color="#26d900"/><stop offset="0.806" stop-color="#0df200"/><stop offset="0.839" stop-color="#00f10e"/><stop offset="1.000" stop-color="#005aa5"/></linearGradient><linearGradient id="h92" gradientUnits="userSpaceOnUse" x1="97.3" x2="344.7" y1="0" y2="0"><stop offset="0.000" stop-color="#0045ba"/><stop offset="0.258" stop-color="#00fe01"/><stop offset="0.484" stop-color="#a55a00"/><stop offset="0.516" stop-color="#b04f00"/><stop offset="0.548" stop-color="#aa5500"/><stop offset="0.774" stop-color="#29d600"/><stop offset="0.806" stop-color="#11ee00"/><stop offset="0.839" stop-color="#00f50a"/><stop offset="1.000" stop-color="#00629d"/></linearGradient><linearGradient id="h93" gradientUnits="userSpaceOnUse" x1="99.5" x2="342.6" y1="0" y2="0"><stop offset="0.000" stop-color="#004bb4"/><stop offset="0.233" stop-color="#00ec13"/><stop offset="0.267" stop-color="#07f800"/><stop offset="0.500" stop-color="#a85700"/><stop offset="0.533" stop-color="#ab5400"/><stop offset="0.767" stop-color="#30cf00"/><stop offset="0.833" stop-color="#00fe01"/><stop offset="1.000" stop-color="#006996"/></linearGradient><linearGradient id="h94" gradientUnits="userSpaceOnUse" x1="101.6" x2="340.5" y1="0" y2="0"><stop offset="0.000" stop-color="#0051ae"/><stop offset="0.233" stop-color="#00ee11"/><stop offset="0.267" stop-color="#08f700"/><stop offset="0.467" stop-color="#936c00"/><stop offset="0.500" stop-color="#a45b00"/><stop offset="0.533" stop-color="#a75800"/><stop offset="0.767" stop-color="#33cc00"/><stop offset="0.833" stop-color="#03fc00"/><stop offset="0.900" stop-color="#00ca35"/><stop offset="1.000" stop-color="#00718e"/></linearGradient><linearGradient id="h95" gradientUnits="userSpaceOnUse" x1="103.8" x2="338.4" y1="0" y2="0"><stop offset="0.000" stop-color="#0057a8"/><stop offset="0.241" stop-color="#00f50a"/><stop offset="0.276" stop-color="#0ff000"/><stop offset="0.483" stop-color="#996600"/><stop offset="0.517" stop-color="#a45b00"/><stop offset="0.586" stop-color="#8f7000"/><stop offset="0.793" stop-color="#24db00"/><stop offset="0.828" stop-color="#0bf400"/><stop offset="0.862" stop-color="#00ef10"/><stop offset="1.000" stop-color="#007986"/></linearGradient><linearGradient id="h96" gradientUnits="userSpaceOnUse" x1="106.0" x2="336.3" y1="0" y2="0"><stop offset="0.000" stop-color="#005da2"/><stop offset="0.241" stop-color="#00f609"/><stop offset="0.276" stop-color="#10ef00"/><stop offset="0.483" stop-color="#966900"/><stop offset="0.517" stop-color="#a05f00"/><stop offset="0.586" stop-color="#8c7300"/><stop offset="0.793" stop-color="#27d800"/><stop offset="0.828" stop-color="#0ff000"/><stop offset="0.862" stop-color="#00f40b"/><stop offset="1.000" stop-color="#00807f"/></linearGradient><linearGradient id="h97" gradientUnits="userSpaceOnUse" x1="108.2" x2="334.2" y1="0" y2="0"><stop offset="0.000" stop-color="#00629d"/><stop offset="0.250" stop-color="#00fd02"/><stop offset="0.464" stop-color="#897600"/><stop offset="0.500" stop-color="#996600"/><stop offset="0.536" stop-color="#9a6500"/><stop offset="0.750" stop-color="#42bd00"/><stop offset="0.857" stop-color="#00fc03"/><stop offset="1.000" stop-color="#008778"/></linearGradient><linearGradient id="h98" gradientUnits="userSpaceOnUse" x1="110.4" x2="332.1" y1="0" y2="0"><stop offset="0.000" stop-color="#006798"/><stop offset="0.214" stop-color="#00e41b"/><stop offset="0.250" stop-color="#00fd02"/><stop offset="0.464" stop-color="#857a00"/><stop offset="0.500" stop-color="#946b00"/><stop offset="0.571" stop-color="#8b7400"/><stop offset="0.786" stop-color="#30cf00"/><stop offset="0.857" stop-color="#01fe00"/><stop offset="1.000" stop-color="#008f70"/></linearGradient><linearGradient id="h99" gradientUnits="userSpaceOnUse" x1="112.6" x2="330.0" y1="0" y2="0"><stop offset="0.000" stop-color="#006b94"/><stop offset="0.222" stop-color="#00eb14"/><stop offset="0.259" stop-color="#05fa00"/><stop offset="0.444" stop-color="#788700"/><stop offset="0.519" stop-color="#916e00"/><stop offset="0.630" stop-color="#748b00"/><stop offset="0.778" stop-color="#36c900"/><stop offset="0.852" stop-color="#08f700"/><stop offset="0.889" stop-color="#00ec13"/><stop offset="1.000" stop-color="#009669"/></linearGradient><linearGradient id="h100" gradientUnits="userSpaceOnUse" x1="114.8" x2="327.9" y1="0" y2="0"><stop offset="0.000" stop-color="#006f90"/><stop offset="0.222" stop-color="#00eb14"/><stop offset="0.259" stop-color="#05fa00"/><stop offset="0.407" stop-color="#619e00"/><stop offset="0.481" stop-color="#847b00"/><stop offset="0.519" stop-color="#8b7400"/><stop offset="0.630" stop-color="#728d00"/><stop offset="0.778" stop-color="#38c700"/><stop offset="0.852" stop-color="#0cf300"/><stop offset="0.889" stop-color="#00f10e"/><stop offset="1.000" stop-color="#009d62"/></linearGradient><linearGradient id="h101" gradientUnits="userSpaceOnUse" x1="117.0" x2="325.8" y1="0" y2="0"><stop offset="0.000" stop-color="#00728d"/><stop offset="0.192" stop-color="#00d926"/><stop offset="0.231" stop-color="#00f20d"/><stop offset="0.269" stop-color="#0cf300"/><stop offset="0.423" stop-color="#669900"/><stop offset="0.500" stop-color="#827d00"/><stop offset="0.577" stop-color="#7d8200"/><stop offset="0.769" stop-color="#3dc200"/><stop offset="0.846" stop-color="#13ec00"/><stop offset="0.885" stop-color="#00f807"/><stop offset="1.000" stop-color="#00a45b"/></linearGradient><linearGradient id="h102" gradientUnits="userSpaceOnUse" x1="119.1" x2="323.7" y1="0" y2="0"><stop offset="0.000" stop-color="#007689"/><stop offset="0.192" stop-color="#00da25"/><stop offset="0.231" stop-color="#00f20d"/><stop offset="0.269" stop-color="#0cf300"/><stop offset="0.423" stop-color="#639c00"/><stop offset="0.500" stop-color="#7c8300"/><stop offset="0.577" stop-color="#788700"/><stop offset="0.769" stop-color="#3ec100"/><stop offset="0.885" stop-color="#00fc03"/><stop offset="1.000" stop-color="#00aa55"/></linearGradient><linearGradient id="h103" gradientUnits="userSpaceOnUse" x1="121.3" x2="321.7" y1="0" y2="0"><stop offset="0.000" stop-color="#007986"/><stop offset="0.200" stop-color="#00df20"/><stop offset="0.240" stop-color="#00f906"/><stop offset="0.280" stop-color="#13ec00"/><stop offset="0.400" stop-color="#55aa00"/><stop offset="0.480" stop-color="#718e00"/><stop offset="0.560" stop-color="#758a00"/><stop offset="0.720" stop-color="#50af00"/><stop offset="0.840" stop-color="#1ce300"/><stop offset="0.880" stop-color="#04fb00"/><stop offset="0.960" stop-color="#00cd32"/><stop offset="1.000" stop-color="#00b14e"/></linearGradient><linearGradient id="h104" gradientUnits="userSpaceOnUse" x1="123.5" x2="319.6" y1="0" y2="0"><stop offset="0.000" stop-color="#007b84"/><stop offset="0.200" stop-color="#00e01f"/><stop offset="0.240" stop-color="#00f906"/><stop offset="0.280" stop-color="#12ed00"/><stop offset="0.400" stop-color="#52ad00"/><stop offset="0.520" stop-color="#708f00"/><stop offset="0.640" stop-color="#639c00"/><stop offset="0.800" stop-color="#32cd00"/><stop offset="0.880" stop-color="#07f800"/><stop offset="0.920" stop-color="#00ed12"/><stop offset="1.000" stop-color="#00b748"/></linearGradient><linearGradient id="h105" gradientUnits="userSpaceOnUse" x1="125.7" x2="317.5" y1="0" y2="0"><stop offset="0.000" stop-color="#007e81"/><stop offset="0.208" stop-color="#00e619"/><stop offset="0.250" stop-color="#00ff00"/><stop offset="0.375" stop-color="#44bb00"/><stop offset="0.500" stop-color="#679800"/><stop offset="0.625" stop-color="#619e00"/><stop offset="0.792" stop-color="#36c900"/><stop offset="0.875" stop-color="#0df200"/><stop offset="0.917" stop-color="#00f30c"/><stop offset="1.000" stop-color="#00bd42"/></linearGradient><linearGradient id="h106" gradientUnits="userSpaceOnUse" x1="127.9" x2="315.4" y1="0" y2="0"><stop offset="0.000" stop-color="#00817e"/><stop offset="0.174" stop-color="#00d32c"/><stop offset="0.217" stop-color="#00ec13"/><stop offset="0.261" stop-color="#06f900"/><stop offset="0.391" stop-color="#47b800"/><stop offset="0.522" stop-color="#629d00"/><stop offset="0.652" stop-color="#59a600"/><stop offset="0.783" stop-color="#3ac500"/><stop offset="0.913" stop-color="#00f906"/><stop offset="1.000" stop-color="#00c33c"/></linearGradient><linearGradient id="h107" gradientUnits="userSpaceOnUse" x1="130.1" x2="313.3" y1="0" y2="0"><stop offset="0.000" stop-color="#00837c"/><stop offset="0.217" stop-color="#00ec13"/><stop offset="0.261" stop-color="#05fa00"/><stop offset="0.391" stop-color="#43bc00"/><stop offset="0.522" stop-color="#5aa500"/><stop offset="0.696" stop-color="#4eb100"/><stop offset="0.826" stop-color="#29d600"/><stop offset="0.913" stop-color="#00fd02"/><stop offset="1.000" stop-color="#00c936"/></linearGradient><linearGradient id="h108" gradientUnits="userSpaceOnUse" x1="132.3" x2="311.2" y1="0" y2="0"><stop offset="0.000" stop-color="#00857a"/><stop offset="0.227" stop-color="#00f10e"/><stop offset="0.273" stop-color="#0bf400"/><stop offset="0.364" stop-color="#35ca00"/><stop offset="0.500" stop-color="#51ae00"/><stop offset="0.636" stop-color="#52ad00"/><stop offset="0.773" stop-color="#3bc400"/><stop offset="0.909" stop-color="#03fc00"/><stop offset="1.000" stop-color="#00ce31"/></linearGradient><linearGradient id="h109" gradientUnits="userSpaceOnUse" x1="134.5" x2="309.1" y1="0" y2="0"><stop offset="0.000" stop-color="#008778"/><stop offset="0.227" stop-color="#00f10e"/><stop offset="0.273" stop-color="#09f600"/><stop offset="0.364" stop-color="#31ce00"/><stop offset="0.500" stop-color="#4ab500"/><stop offset="0.682" stop-color="#49b600"/><stop offset="0.818" stop-color="#2cd300"/><stop offset="0.909" stop-color="#05fa00"/><stop offset="0.955" stop-color="#00ed12"/><stop offset="1.000" stop-color="#00d32c"/></linearGradient><linearGradient id="h110" gradientUnits="userSpaceOnUse" x1="136.6" x2="307.0" y1="0" y2="0"><stop offset="0.000" stop-color="#008a75"/><stop offset="0.238" stop-color="#00f609"/><stop offset="0.286" stop-color="#0ef100"/><stop offset="0.381" stop-color="#31ce00"/><stop offset="0.571" stop-color="#47b800"/><stop offset="0.762" stop-color="#3ac500"/><stop offset="0.905" stop-color="#0af500"/><stop offset="0.952" stop-color="#00f10e"/><stop offset="1.000" stop-color="#00d827"/></linearGradient><linearGradient id="h111" gradientUnits="userSpaceOnUse" x1="138.8" x2="304.9" y1="0" y2="0"><stop offset="0.000" stop-color="#008c73"/><stop offset="0.238" stop-color="#00f50a"/><stop offset="0.286" stop-color="#0cf300"/><stop offset="0.381" stop-color="#2cd300"/><stop offset="0.619" stop-color="#42bd00"/><stop offset="0.762" stop-color="#38c700"/><stop offset="0.905" stop-color="#0bf400"/><stop offset="0.952" stop-color="#00f40b"/><stop offset="1.000" stop-color="#00dc23"/></linearGradient><linearGradient id="h112" gradientUnits="userSpaceOnUse" x1="141.0" x2="302.8" y1="0" y2="0"><stop offset="0.000" stop-color="#008e71"/><stop offset="0.250" stop-color="#00f906"/><stop offset="0.400" stop-color="#2ad500"/><stop offset="0.650" stop-color="#3cc300"/><stop offset="0.800" stop-color="#2ed100"/><stop offset="0.900" stop-color="#0ff000"/><stop offset="0.950" stop-color="#00f807"/><stop offset="1.000" stop-color="#00e01f"/></linearGradient><linearGradient id="h113" gradientUnits="userSpaceOnUse" x1="143.2" x2="300.7" y1="0" y2="0"><stop offset="0.000" stop-color="#00906f"/><stop offset="0.250" stop-color="#00f708"/><stop offset="0.300" stop-color="#0bf400"/><stop offset="0.450" stop-color="#2ad500"/><stop offset="0.700" stop-color="#36c900"/><stop offset="0.850" stop-color="#20df00"/><stop offset="0.950" stop-color="#00fa05"/><stop offset="1.000" stop-color="#00e41b"/></linearGradient><linearGradient id="h114" gradientUnits="userSpaceOnUse" x1="145.4" x2="298.6" y1="0" y2="0"><stop offset="0.000" stop-color="#00926d"/><stop offset="0.263" stop-color="#00fa05"/><stop offset="0.421" stop-color="#21de00"/><stop offset="0.684" stop-color="#31ce00"/><stop offset="0.842" stop-color="#21de00"/><stop offset="0.947" stop-color="#00fd02"/><stop offset="1.000" stop-color="#00e718"/></linearGradient><linearGradient id="h115" gradientUnits="userSpaceOnUse" x1="147.6" x2="296.6" y1="0" y2="0"><stop offset="0.000" stop-color="#00936c"/><stop offset="0.263" stop-color="#00f708"/><stop offset="0.316" stop-color="#08f700"/><stop offset="0.474" stop-color="#1ee100"/><stop offset="0.737" stop-color="#2bd400"/><stop offset="0.895" stop-color="#11ee00"/><stop offset="0.947" stop-color="#00ff00"/><stop offset="1.000" stop-color="#00ea15"/></linearGradient><linearGradient id="h116" gradientUnits="userSpaceOnUse" x1="149.8" x2="294.5" y1="0" y2="0"><stop offset="0.000" stop-color="#00956a"/><stop offset="0.278" stop-color="#00f807"/><stop offset="0.500" stop-color="#1ae500"/><stop offset="0.722" stop-color="#27d800"/><stop offset="0.833" stop-color="#1ee100"/><stop offset="0.944" stop-color="#01fe00"/><stop offset="1.000" stop-color="#00ec13"/></linearGradient><linearGradient id="h117" gradientUnits="userSpaceOnUse" x1="152.0" x2="292.4" y1="0" y2="0"><stop offset="0.000" stop-color="#009768"/><stop offset="0.278" stop-color="#00f50a"/><stop offset="0.333" stop-color="#02fd00"/><stop offset="0.722" stop-color="#22dd00"/><stop offset="0.889" stop-color="#11ee00"/><stop offset="0.944" stop-color="#02fd00"/><stop offset="1.000" stop-color="#00ee11"/></linearGradient><linearGradient id="h118" gradientUnits="userSpaceOnUse" x1="154.1" x2="290.3" y1="0" y2="0"><stop offset="0.000" stop-color="#009867"/><stop offset="0.294" stop-color="#00f50a"/><stop offset="0.353" stop-color="#00ff00"/><stop offset="0.765" stop-color="#1de200"/><stop offset="0.882" stop-color="#10ef00"/><stop offset="0.941" stop-color="#02fd00"/><stop offset="1.000" stop-color="#00ef10"/></linearGradient><linearGradient id="h119" gradientUnits="userSpaceOnUse" x1="156.3" x2="288.2" y1="0" y2="0"><stop offset="0.000" stop-color="#009a65"/><stop offset="0.250" stop-color="#00e619"/><stop offset="0.375" stop-color="#00fd02"/><stop offset="0.750" stop-color="#17e800"/><stop offset="0.875" stop-color="#0ff000"/><stop offset="0.938" stop-color="#02fd00"/><stop offset="1.000" stop-color="#00f00f"/></linearGradient><linearGradient id="h120" gradientUnits="userSpaceOnUse" x1="158.5" x2="286.1" y1="0" y2="0"><stop offset="0.000" stop-color="#009b64"/><stop offset="0.250" stop-color="#00e31c"/><stop offset="0.438" stop-color="#00fc03"/><stop offset="0.625" stop-color="#0af500"/><stop offset="0.812" stop-color="#11ee00"/><stop offset="0.937" stop-color="#01fe00"/><stop offset="1.000" stop-color="#00f10e"/></linearGradient><linearGradient id="h121" gradientUnits="userSpaceOnUse" x1="160.7" x2="284.0" y1="0" y2="0"><stop offset="0.000" stop-color="#009c63"/><stop offset="0.267" stop-color="#00e21d"/><stop offset="0.533" stop-color="#00fb04"/><stop offset="0.800" stop-color="#0df200"/><stop offset="0.933" stop-color="#00ff00"/><stop offset="1.000" stop-color="#00f00f"/></linearGradient><linearGradient id="h122" gradientUnits="userSpaceOnUse" x1="162.9" x2="281.9" y1="0" y2="0"><stop offset="0.000" stop-color="#009d62"/><stop offset="0.267" stop-color="#00de21"/><stop offset="0.667" stop-color="#00ff00"/><stop offset="0.867" stop-color="#05fa00"/><stop offset="0.933" stop-color="#00fc03"/><stop offset="1.000" stop-color="#00ef10"/></linearGradient><linearGradient id="h123" gradientUnits="userSpaceOnUse" x1="165.1" x2="279.8" y1="0" y2="0"><stop offset="0.000" stop-color="#009d62"/><stop offset="0.286" stop-color="#00dc23"/><stop offset="0.786" stop-color="#01fe00"/><stop offset="0.929" stop-color="#00fa05"/><stop offset="1.000" stop-color="#00ee11"/></linearGradient><linearGradient id="h124" gradientUnits="userSpaceOnUse" x1="167.3" x2="277.7" y1="0" y2="0"><stop offset="0.000" stop-color="#009d62"/><stop offset="0.286" stop-color="#00d728"/><stop offset="0.857" stop-color="#00fb04"/><stop offset="1.000" stop-color="#00ec13"/></linearGradient><linearGradient id="h125" gradientUnits="userSpaceOnUse" x1="169.4" x2="275.6" y1="0" y2="0"><stop offset="0.000" stop-color="#009d62"/><stop offset="0.231" stop-color="#00cb34"/><stop offset="0.846" stop-color="#00f50a"/><stop offset="1.000" stop-color="#00ea15"/></linearGradient><linearGradient id="h126" gradientUnits="userSpaceOnUse" x1="171.6" x2="273.5" y1="0" y2="0"><stop offset="0.000" stop-color="#009d62"/><stop offset="0.231" stop-color="#00c738"/><stop offset="0.846" stop-color="#00ef10"/><stop offset="1.000" stop-color="#00e619"/></linearGradient><linearGradient id="h127" gradientUnits="userSpaceOnUse" x1="173.8" x2="271.5" y1="0" y2="0"><stop offset="0.000" stop-color="#009c63"/><stop offset="0.250" stop-color="#00c43b"/><stop offset="0.917" stop-color="#00e916"/><stop offset="1.000" stop-color="#00e31c"/></linearGradient><linearGradient id="h128" gradientUnits="userSpaceOnUse" x1="176.0" x2="269.4" y1="0" y2="0"><stop offset="0.000" stop-color="#009b64"/><stop offset="0.250" stop-color="#00bf40"/><stop offset="0.917" stop-color="#00e21d"/><stop offset="1.000" stop-color="#00de21"/></linearGradient><linearGradient id="h129" gradientUnits="userSpaceOnUse" x1="178.2" x2="267.3" y1="0" y2="0"><stop offset="0.000" stop-color="#009966"/><stop offset="0.273" stop-color="#00bb44"/><stop offset="0.727" stop-color="#00ce31"/><stop offset="0.909" stop-color="#00db24"/><stop offset="1.000" stop-color="#00d926"/></linearGradient><linearGradient id="h130" gradientUnits="userSpaceOnUse" x1="180.4" x2="265.2" y1="0" y2="0"><stop offset="0.000" stop-color="#009867"/><stop offset="0.273" stop-color="#00b54a"/><stop offset="0.727" stop-color="#00c53a"/><stop offset="1.000" stop-color="#00d32c"/></linearGradient><linearGradient id="h131" gradientUnits="userSpaceOnUse" x1="182.6" x2="263.1" y1="0" y2="0"><stop offset="0.000" stop-color="#00956a"/><stop offset="0.300" stop-color="#00b04f"/><stop offset="0.800" stop-color="#00c13e"/><stop offset="1.000" stop-color="#00cc33"/></linearGradient><linearGradient id="h132" gradientUnits="userSpaceOnUse" x1="184.8" x2="261.0" y1="0" y2="0"><stop offset="0.000" stop-color="#00926d"/><stop offset="0.300" stop-color="#00a956"/><stop offset="0.800" stop-color="#00b649"/><stop offset="1.000" stop-color="#00c33c"/></linearGradient><linearGradient id="h133" gradientUnits="userSpaceOnUse" x1="186.9" x2="258.9" y1="0" y2="0"><stop offset="0.000" stop-color="#008f70"/><stop offset="0.333" stop-color="#00a25d"/><stop offset="0.778" stop-color="#00aa55"/><stop offset="1.000" stop-color="#00b946"/></linearGradient><linearGradient id="h134" gradientUnits="userSpaceOnUse" x1="189.1" x2="256.8" y1="0" y2="0"><stop offset="0.000" stop-color="#008b74"/><stop offset="0.375" stop-color="#009b64"/><stop offset="0.750" stop-color="#009f60"/><stop offset="1.000" stop-color="#00ae51"/></linearGradient><linearGradient id="h135" gradientUnits="userSpaceOnUse" x1="191.3" x2="254.7" y1="0" y2="0"><stop offset="0.000" stop-color="#008778"/><stop offset="0.375" stop-color="#00936c"/><stop offset="0.875" stop-color="#009a65"/><stop offset="1.000" stop-color="#00a25d"/></linearGradient><linearGradient id="h136" gradientUnits="userSpaceOnUse" x1="193.5" x2="252.6" y1="0" y2="0"><stop offset="0.000" stop-color="#00827d"/><stop offset="0.429" stop-color="#008a75"/><stop offset="0.857" stop-color="#008d72"/><stop offset="1.000" stop-color="#009669"/></linearGradient><linearGradient id="h137" gradientUnits="userSpaceOnUse" x1="195.7" x2="250.5" y1="0" y2="0"><stop offset="0.000" stop-color="#007d82"/><stop offset="0.571" stop-color="#00807f"/><stop offset="1.000" stop-color="#008976"/></linearGradient><linearGradient id="h138" gradientUnits="userSpaceOnUse" x1="197.9" x2="248.4" y1="0" y2="0"><stop offset="0.000" stop-color="#007788"/><stop offset="0.833" stop-color="#00758a"/><stop offset="1.000" stop-color="#007c83"/></linearGradient><linearGradient id="h139" gradientUnits="userSpaceOnUse" x1="200.1" x2="246.4" y1="0" y2="0"><stop offset="0.000" stop-color="#00708f"/><stop offset="0.833" stop-color="#006a95"/><stop offset="1.000" stop-color="#006f90"/></linearGradient><linearGradient id="h140" gradientUnits="userSpaceOnUse" x1="202.3" x2="244.3" y1="0" y2="0"><stop offset="0.000" stop-color="#006897"/><stop offset="1.000" stop-color="#00639c"/></linearGradient><linearGradient id="h141" gradientUnits="userSpaceOnUse" x1="204.4" x2="242.2" y1="0" y2="0"><stop offset="0.000" stop-color="#005fa0"/><stop offset="1.000" stop-color="#0057a8"/></linearGradient><linearGradient id="h142" gradientUnits="userSpaceOnUse" x1="206.6" x2="240.1" y1="0" y2="0"><stop offset="0.000" stop-color="#0055aa"/><stop offset="1.000" stop-color="#004bb4"/></linearGradient><linearGradient id="h143" gradientUnits="userSpaceOnUse" x1="208.8" x2="238.0" y1="0" y2="0"><stop offset="0.000" stop-color="#004ab5"/><stop offset="1.000" stop-color="#0040bf"/></linearGradient><linearGradient id="h144" gradientUnits="userSpaceOnUse" x1="211.0" x2="235.9" y1="0" y2="0"><stop offset="0.000" stop-color="#003ec1"/><stop offset="1.000" stop-color="#0035ca"/></linearGradient><linearGradient id="h145" gradientUnits="userSpaceOnUse" x1="213.2" x2="233.8" y1="0" y2="0"><stop offset="0.000" stop-color="#0031ce"/><stop offset="1.000" stop-color="#002ad5"/></linearGradient><linearGradient id="h146" gradientUnits="userSpaceOnUse" x1="215.4" x2="231.7" y1="0" y2="0"><stop offset="0.000" stop-color="#0025da"/><stop offset="1.000" stop-color="#001fe0"/></linearGradient><linearGradient id="h147" gradientUnits="userSpaceOnUse" x1="217.6" x2="229.6" y1="0" y2="0"><stop offset="0.000" stop-color="#0018e7"/><stop offset="1.000" stop-color="#0014eb"/></linearGradient><linearGradient id="h148" gradientUnits="userSpaceOnUse" x1="219.7" x2="227.5" y1="0" y2="0"><stop offset="0.000" stop-color="#000bf4"/><stop offset="1.000" stop-color="#0009f6"/></linearGradient><linearGradient id="h149" gradientUnits="userSpaceOnUse" x1="221.9" x2="225.4" y1="0" y2="0"><stop offset="0.000" stop-color="#0000ff"/><stop offset="1.000" stop-color="#0000ff"/></linearGradient></defs>
<g clip-path="url(#dm)"><g shape-rendering="crispEdges"><rect x="226.2" y="86" width="4.9" height="2" fill="url(#h0)"/><rect x="224.2" y="88" width="8.7" height="2" fill="url(#h1)"/><rect x="222.2" y="90" width="12.5" height="2" fill="url(#h2)"/><rect x="220.2" y="92" width="16.4" height="2" fill="url(#h3)"/><rect x="218.2" y="94" width="20.2" height="2" fill="url(#h4)"/><rect x="216.2" y="96" width="24.0" height="2" fill="url(#h5)"/><rect x="214.2" y="98" width="27.8" height="2" fill="url(#h6)"/><rect x="212.2" y="100" width="31.7" height="2" fill="url(#h7)"/><rect x="210.2" y="102" width="35.5" height="2" fill="url(#h8)"/><rect x="208.2" y="104" width="39.3" height="2" fill="url(#h9)"/><rect x="206.2" y="106" width="43.2" height="2" fill="url(#h10)"/><rect x="204.2" y="108" width="47.0" height="2" fill="url(#h11)"/><rect x="202.2" y="110" width="50.8" height="2" fill="url(#h12)"/><rect x="200.2" y="112" width="54.6" height="2" fill="url(#h13)"/><rect x="198.2" y="114" width="58.5" height="2" fill="url(#h14)"/><rect x="196.2" y="116" width="62.3" height="2" fill="url(#h15)"/><rect x="194.2" y="118" width="66.1" height="2" fill="url(#h16)"/><rect x="192.2" y="120" width="70.0" height="2" fill="url(#h17)"/><rect x="190.2" y="122" width="73.8" height="2" fill="url(#h18)"/><rect x="188.2" y="124" width="77.6" height="2" fill="url(#h19)"/><rect x="186.2" y="126" width="81.4" height="2" fill="url(#h20)"/><rect x="184.2" y="128" width="85.3" height="2" fill="url(#h21)"/><rect x="182.2" y="130" width="89.1" height="2" fill="url(#h22)"/><rect x="180.2" y="132" width="92.9" height="2" fill="url(#h23)"/><rect x="178.2" y="134" width="96.8" height="2" fill="url(#h24)"/><rect x="176.2" y="136" width="100.6" height="2" fill="url(#h25)"/><rect x="174.2" y="138" width="104.4" height="2" fill="url(#h26)"/><rect x="172.2" y="140" width="108.3" height="2" fill="url(#h27)"/><rect x="170.2" y="142" width="112.1" height="2" fill="url(#h28)"/><rect x="168.2" y="144" width="115.9" height="2" fill="url(#h29)"/><rect x="166.2" y="146" width="119.7" height="2" fill="url(#h30)"/><rect x="164.2" y="148" width="123.6" height="2" fill="url(#h31)"/><rect x="162.2" y="150" width="127.4" height="2" fill="url(#h32)"/><rect x="160.2" y="152" width="131.2" height="2" fill="url(#h33)"/><rect x="158.2" y="154" width="135.1" height="2" fill="url(#h34)"/><rect x="156.2" y="156" width="138.9" height="2" fill="url(#h35)"/><rect x="154.2" y="158" width="142.7" height="2" fill="url(#h36)"/><rect x="152.2" y="160" width="146.5" height="2" fill="url(#h37)"/><rect x="150.2" y="162" width="150.4" height="2" fill="url(#h38)"/><rect x="148.1" y="164" width="154.2" height="2" fill="url(#h39)"/><rect x="146.1" y="166" width="158.0" height="2" fill="url(#h40)"/><rect x="144.1" y="168" width="161.9" height="2" fill="url(#h41)"/><rect x="142.1" y="170" width="165.7" height="2" fill="url(#h42)"/><rect x="140.1" y="172" width="169.5" height="2" fill="url(#h43)"/><rect x="138.1" y="174" width="173.3" height="2" fill="url(#h44)"/><rect x="136.1" y="176" width="177.2" height="2" fill="url(#h45)"/><rect x="134.1" y="178" width="181.0" height="2" fill="url(#h46)"/><rect x="132.1" y="180" width="184.8" height="2" fill="url(#h47)"/><rect x="130.1" y="182" width="188.7" height="2" fill="url(#h48)"/><rect x="128.1" y="184" width="192.5" height="2" fill="url(#h49)"/><rect x="126.1" y="186" width="196.3" height="2" fill="url(#h50)"/><rect x="124.1" y="188" width="200.1" height="2" fill="url(#h51)"/><rect x="122.1" y="190" width="204.0" height="2" fill="url(#h52)"/><rect x="120.1" y="192" width="207.8" height="2" fill="url(#h53)"/><rect x="118.1" y="194" width="211.6" height="2" fill="url(#h54)"/><rect x="116.1" y="196" width="215.5" height="2" fill="url(#h55)"/><rect x="114.1" y="198" width="219.3" height="2" fill="url(#h56)"/><rect x="112.1" y="200" width="223.1" height="2" fill="url(#h57)"/><rect x="110.1" y="202" width="226.9" height="2" fill="url(#h58)"/><rect x="108.1" y="204" width="230.8" height="2" fill="url(#h59)"/><rect x="106.1" y="206" width="234.6" height="2" fill="url(#h60)"/><rect x="104.1" y="208" width="238.4" height="2" fill="url(#h61)"/><rect x="102.1" y="210" width="242.3" height="2" fill="url(#h62)"/><rect x="100.1" y="212" width="246.1" height="2" fill="url(#h63)"/><rect x="98.1" y="214" width="249.9" height="2" fill="url(#h64)"/><rect x="96.1" y="216" width="253.7" height="2" fill="url(#h65)"/><rect x="94.1" y="218" width="257.6" height="2" fill="url(#h66)"/><rect x="92.1" y="220" width="261.4" height="2" fill="url(#h67)"/><rect x="90.1" y="222" width="265.2" height="2" fill="url(#h68)"/><rect x="88.1" y="224" width="269.1" height="2" fill="url(#h69)"/><rect x="86.1" y="226" width="272.9" height="2" fill="url(#h70)"/><rect x="84.1" y="228" width="276.7" height="2" fill="url(#h71)"/><rect x="82.1" y="230" width="280.5" height="2" fill="url(#h72)"/><rect x="80.1" y="232" width="284.4" height="2" fill="url(#h73)"/><rect x="78.1" y="234" width="288.2" height="2" fill="url(#h74)"/><rect x="76.1" y="236" width="292.0" height="2" fill="url(#h75)"/><rect x="74.1" y="238" width="295.9" height="2" fill="url(#h76)"/><rect x="72.1" y="240" width="299.7" height="2" fill="url(#h77)"/><rect x="70.1" y="242" width="302.6" height="2" fill="url(#h78)"/><rect x="69.9" y="244" width="301.9" height="2" fill="url(#h79)"/><rect x="71.0" y="246" width="298.7" height="2" fill="url(#h80)"/><rect x="73.2" y="248" width="294.5" height="2" fill="url(#h81)"/><rect x="75.4" y="250" width="290.2" height="2" fill="url(#h82)"/><rect x="77.6" y="252" width="285.9" height="2" fill="url(#h83)"/><rect x="79.8" y="254" width="281.6" height="2" fill="url(#h84)"/><rect x="82.0" y="256" width="277.3" height="2" fill="url(#h85)"/><rect x="84.2" y="258" width="273.1" height="2" fill="url(#h86)"/><rect x="86.3" y="260" width="268.8" height="2" fill="url(#h87)"/><rect x="88.5" y="262" width="264.5" height="2" fill="url(#h88)"/><rect x="90.7" y="264" width="260.2" height="2" fill="url(#h89)"/><rect x="92.9" y="266" width="255.9" height="2" fill="url(#h90)"/><rect x="95.1" y="268" width="251.7" height="2" fill="url(#h91)"/><rect x="97.3" y="270" width="247.4" height="2" fill="url(#h92)"/><rect x="99.5" y="272" width="243.1" height="2" fill="url(#h93)"/><rect x="101.6" y="274" width="238.8" height="2" fill="url(#h94)"/><rect x="103.8" y="276" width="234.6" height="2" fill="url(#h95)"/><rect x="106.0" y="278" width="230.3" height="2" fill="url(#h96)"/><rect x="108.2" y="280" width="226.0" height="2" fill="url(#h97)"/><rect x="110.4" y="282" width="221.7" height="2" fill="url(#h98)"/><rect x="112.6" y="284" width="217.4" height="2" fill="url(#h99)"/><rect x="114.8" y="286" width="213.2" height="2" fill="url(#h100)"/><rect x="117.0" y="288" width="208.9" height="2" fill="url(#h101)"/><rect x="119.1" y="290" width="204.6" height="2" fill="url(#h102)"/><rect x="121.3" y="292" width="200.3" height="2" fill="url(#h103)"/><rect x="123.5" y="294" width="196.0" height="2" fill="url(#h104)"/><rect x="125.7" y="296" width="191.8" height="2" fill="url(#h105)"/><rect x="127.9" y="298" width="187.5" height="2" fill="url(#h106)"/><rect x="130.1" y="300" width="183.2" height="2" fill="url(#h107)"/><rect x="132.3" y="302" width="178.9" height="2" fill="url(#h108)"/><rect x="134.5" y="304" width="174.7" height="2" fill="url(#h109)"/><rect x="136.6" y="306" width="170.4" height="2" fill="url(#h110)"/><rect x="138.8" y="308" width="166.1" height="2" fill="url(#h111)"/><rect x="141.0" y="310" width="161.8" height="2" fill="url(#h112)"/><rect x="143.2" y="312" width="157.5" height="2" fill="url(#h113)"/><rect x="145.4" y="314" width="153.3" height="2" fill="url(#h114)"/><rect x="147.6" y="316" width="149.0" height="2" fill="url(#h115)"/><rect x="149.8" y="318" width="144.7" height="2" fill="url(#h116)"/><rect x="152.0" y="320" width="140.4" height="2" fill="url(#h117)"/><rect x="154.1" y="322" width="136.1" height="2" fill="url(#h118)"/><rect x="156.3" y="324" width="131.9" height="2" fill="url(#h119)"/><rect x="158.5" y="326" width="127.6" height="2" fill="url(#h120)"/><rect x="160.7" y="328" width="123.3" height="2" fill="url(#h121)"/><rect x="162.9" y="330" width="119.0" height="2" fill="url(#h122)"/><rect x="165.1" y="332" width="114.7" height="2" fill="url(#h123)"/><rect x="167.3" y="334" width="110.5" height="2" fill="url(#h124)"/><rect x="169.4" y="336" width="106.2" height="2" fill="url(#h125)"/><rect x="171.6" y="338" width="101.9" height="2" fill="url(#h126)"/><rect x="173.8" y="340" width="97.6" height="2" fill="url(#h127)"/><rect x="176.0" y="342" width="93.4" height="2" fill="url(#h128)"/><rect x="178.2" y="344" width="89.1" height="2" fill="url(#h129)"/><rect x="180.4" y="346" width="84.8" height="2" fill="url(#h130)"/><rect x="182.6" y="348" width="80.5" height="2" fill="url(#h131)"/><rect x="184.8" y="350" width="76.2" height="2" fill="url(#h132)"/><rect x="186.9" y="352" width="72.0" height="2" fill="url(#h133)"/><rect x="189.1" y="354" width="67.7" height="2" fill="url(#h134)"/><rect x="191.3" y="356" width="63.4" height="2" fill="url(#h135)"/><rect x="193.5" y="358" width="59.1" height="2" fill="url(#h136)"/><rect x="195.7" y="360" width="54.8" height="2" fill="url(#h137)"/><rect x="197.9" y="362" width="50.6" height="2" fill="url(#h138)"/><rect x="200.1" y="364" width="46.3" height="2" fill="url(#h139)"/><rect x="202.3" y="366" width="42.0" height="2" fill="url(#h140)"/><rect x="204.4" y="368" width="37.7" height="2" fill="url(#h141)"/><rect x="206.6" y="370" width="33.4" height="2" fill="url(#h142)"/><rect x="208.8" y="372" width="29.2" height="2" fill="url(#h143)"/><rect x="211.0" y="374" width="24.9" height="2" fill="url(#h144)"/><rect x="213.2" y="376" width="20.6" height="2" fill="url(#h145)"/><rect x="215.4" y="378" width="16.3" height="2" fill="url(#h146)"/><rect x="217.6" y="380" width="12.1" height="2" fill="url(#h147)"/><rect x="219.7" y="382" width="7.8" height="2" fill="url(#h148)"/><rect x="221.9" y="384" width="3.5" height="2" fill="url(#h149)"/></g>
<path d="M243.0 109.0L246.0 108.6L249.0 108.5L252.0 108.6L255.0 108.9L257.0 109.1L260.0 109.6L262.5 110.0L265.0 110.5L267.3 111.0L270.0 111.6L272.0 112.1L275.0 113.0L277.0 113.6L279.0 114.2L281.4 115.0L284.0 116.0L286.0 116.7L288.0 117.6L290.0 118.4L292.0 119.4L294.0 120.3L296.0 121.4L298.0 122.5L300.0 123.7L302.0 125.0L303.6 126.0L305.0 127.0L307.0 128.5L308.9 130.0L310.0 131.0L312.0 132.7L313.3 134.0L315.0 135.7L316.2 137.0L318.0 139.0L319.0 140.2L320.4 142.0L321.9 144.0L323.0 145.6L324.0 147.2L325.1 149.0L326.3 151.0L327.3 153.0L328.3 155.0L329.2 157.0L330.1 159.0L331.0 161.3L331.9 164.0L332.6 166.0L333.1 168.0L333.9 171.0L334.3 173.0L334.9 176.0L335.2 178.0L335.6 181.0L336.0 184.0L336.1 186.0L336.3 189.0L336.5 192.0L336.5 195.0L336.6 198.0L336.7 201.0L336.8 204.0L337.0 207.0L337.3 209.0L337.8 212.0L338.2 214.0L338.7 217.0L339.1 219.0L339.7 222.0L340.1 224.0L340.6 227.0L341.0 229.4L341.4 232.0L341.8 235.0L342.1 237.0L342.5 240.0L342.8 243.0L343.0 245.6L343.1 248.0L343.3 251.0L343.4 254.0L343.5 257.0L343.5 260.0L343.5 263.0L343.5 266.0L343.5 269.0L343.5 272.0L343.5 275.0L343.5 278.0L343.5 281.0L343.4 284.0L343.3 287.0L343.1 290.0L343.0 292.1L342.8 295.0L342.4 298.0L342.1 301.0L341.8 303.0L341.3 306.0L340.9 308.0L340.2 311.0L339.8 313.0L339.0 315.9L338.4 318.0L337.7 320.0L337.0 322.1L336.0 324.7L335.1 327.0L334.2 329.0L333.2 331.0L332.2 333.0L331.1 335.0L330.0 336.8L329.0 338.4L327.9 340.0L326.5 342.0L325.0 344.0L324.0 345.2L322.5 347.0L321.0 348.6L319.7 350.0L318.0 351.6L316.5 353.0L315.0 354.3L313.0 355.9L311.5 357.0L310.0 358.0L308.0 359.4L306.0 360.6L304.0 361.7L302.0 362.7L300.0 363.7L298.0 364.6L296.0 365.4L294.0 366.1L291.3 367.0L289.0 367.6L287.0 368.1L284.0 368.8L282.0 369.1L279.0 369.5L276.0 369.8L273.0 369.9L270.0 370.0L267.0 369.9L264.0 369.7L261.0 369.3L258.6 369.0L256.0 368.6L253.0 368.1L251.0 367.7L248.0 367.1L246.0 366.7L243.0 366.2L241.0 366.0L238.0 365.8L235.0 365.7L232.0 365.8L229.0 366.0L227.0 366.2L224.0 366.4L221.0 366.6L218.0 366.8L215.0 367.0L213.0 367.1L210.0 367.4L207.0 367.5L204.0 367.6L201.0 367.4L198.2 367.0L196.0 366.6L193.0 366.0L191.0 365.5L189.0 365.0L186.0 364.1L184.0 363.4L182.0 362.7L180.0 361.9L177.8 361.0L175.6 360.0L173.5 359.0L171.6 358.0L169.7 357.0L168.0 356.0L166.0 354.8L164.0 353.5L162.0 352.2L160.3 351.0L159.0 350.0L157.0 348.5L155.1 347.0L153.9 346.0L152.0 344.3L150.5 343.0L149.0 341.6L147.3 340.0L146.0 338.7L144.3 337.0L143.0 335.6L141.5 334.0L140.0 332.3L138.9 331.0L137.2 329.0L136.0 327.6L134.7 326.0L133.1 324.0L132.0 322.5L130.8 321.0L129.4 319.0L128.0 317.1L127.0 315.7L125.8 314.0L124.5 312.0L123.2 310.0L122.0 308.1L121.0 306.5L120.0 304.8L118.9 303.0L117.8 301.0L116.7 299.0L115.7 297.0L114.7 295.0L113.8 293.0L112.9 291.0L112.0 288.8L111.0 286.1L110.3 284.0L109.7 282.0L109.1 279.0L108.8 277.0L108.5 274.0L108.3 271.0L108.2 268.0L108.1 265.0L108.0 262.0L107.9 260.0L107.8 257.0L107.5 254.0L107.2 251.0L106.9 249.0L106.2 246.0L105.7 244.0L105.0 241.7L104.1 239.0L103.5 237.0L102.8 235.0L102.0 232.8L101.0 230.0L100.3 228.0L99.7 226.0L99.0 224.0L98.0 221.0L97.4 219.0L96.9 217.0L96.2 214.0L95.8 212.0L95.3 209.0L95.0 206.7L94.7 204.0L94.4 201.0L94.3 198.0L94.2 195.0L94.2 192.0L94.3 189.0L94.6 186.0L94.9 183.0L95.2 181.0L95.7 178.0L96.2 176.0L96.9 173.0L97.5 171.0L98.1 169.0L99.0 166.4L99.9 164.0L100.8 162.0L101.7 160.0L102.8 158.0L103.9 156.0L105.0 154.1L106.0 152.5L107.0 151.0L108.4 149.0L109.9 147.0L111.0 145.7L112.4 144.0L114.0 142.3L115.2 141.0L117.0 139.2L118.3 138.0L120.0 136.5L121.8 135.0L123.1 134.0L125.0 132.6L127.0 131.2L128.8 130.0L130.4 129.0L132.1 128.0L134.0 126.9L136.0 125.8L138.0 124.8L140.0 123.9L142.0 123.0L144.3 122.0L146.9 121.0L149.0 120.2L151.0 119.5L153.0 118.8L155.7 118.0L158.0 117.3L160.0 116.8L163.0 116.0L165.0 115.5L167.3 115.0L170.0 114.4L172.1 114.0L175.0 113.4L177.3 113.0L180.0 112.5L183.0 112.0L185.0 111.7L188.0 111.3L190.0 111.0L193.0 110.6L196.0 110.2L198.3 110.0L201.0 109.8L204.0 109.6L207.0 109.5L210.0 109.6L213.0 109.9L215.0 110.2L218.0 110.5L221.0 110.8L223.4 111.0L226.0 111.1L229.0 111.0L231.0 110.8L234.0 110.5L237.0 110.0L239.0 109.7L242.0 109.2M217.0 139.9L220.0 139.8L223.0 139.7L226.0 139.7L229.0 139.8L232.0 139.9L234.0 140.0L237.0 140.3L240.0 140.7L242.3 141.0L245.0 141.5L247.7 142.0L250.0 142.5L252.1 143.0L255.0 143.7L257.0 144.1L260.0 144.7L262.0 145.1L265.0 145.7L267.0 146.1L270.0 146.8L272.0 147.3L274.2 148.0L277.0 148.9L279.0 149.7L281.0 150.5L283.0 151.4L285.0 152.4L287.0 153.5L289.0 154.8L290.7 156.0L292.0 157.1L294.0 158.9L295.1 160.0L297.0 162.0L298.0 163.2L299.5 165.0L301.0 166.8L302.0 168.1L303.4 170.0L304.7 172.0L305.9 174.0L307.0 176.0L307.9 178.0L308.7 180.0L309.5 182.0L310.1 184.0L311.0 187.0L311.5 189.0L312.0 191.3L312.5 194.0L313.0 197.0L313.3 199.0L313.7 202.0L314.0 204.1L314.4 207.0L314.8 210.0L315.1 212.0L315.5 215.0L315.8 218.0L316.0 221.0L316.0 223.0L316.1 226.0L316.2 229.0L316.3 232.0L316.3 235.0L316.3 238.0L316.4 241.0L316.4 244.0L316.5 247.0L316.6 250.0L316.6 253.0L316.6 256.0L316.6 259.0L316.6 262.0L316.5 265.0L316.4 268.0L316.2 271.0L316.0 274.0L315.9 276.0L315.6 279.0L315.4 282.0L315.0 285.0L314.8 287.0L314.4 290.0L314.0 292.4L313.5 295.0L313.0 297.8L312.5 300.0L312.0 302.1L311.2 305.0L310.7 307.0L310.0 309.0L309.0 311.8L308.1 314.0L307.3 316.0L306.3 318.0L305.3 320.0L304.2 322.0L303.0 323.9L302.0 325.4L300.9 327.0L299.4 329.0L298.0 330.7L296.8 332.0L295.0 333.9L293.9 335.0L292.0 336.7L290.4 338.0L289.0 339.0L287.0 340.5L285.0 341.7L283.0 342.9L281.0 343.9L279.0 344.9L277.0 345.7L275.0 346.5L273.0 347.1L270.0 347.9L268.0 348.3L265.0 348.8L262.2 349.0L261.0 349.0L258.0 348.7L255.0 348.2L253.0 347.8L250.0 347.1L248.0 346.6L245.3 346.0L243.0 345.5L240.7 345.0L238.0 344.4L235.6 344.0L233.0 343.5L230.0 343.1L228.0 342.8L225.0 342.4L222.0 342.1L220.0 341.9L217.0 341.7L214.0 341.5L211.0 341.2L209.0 340.9L206.0 340.4L203.9 340.0L201.0 339.3L199.0 338.7L197.0 338.0L194.5 337.0L192.4 336.0L190.5 335.0L188.7 334.0L187.0 332.9L185.0 331.6L183.0 330.1L181.6 329.0L180.0 327.7L178.2 326.0L177.0 324.9L175.2 323.0L174.0 321.8L172.5 320.0L171.0 318.2L170.0 317.0L168.4 315.0L167.0 313.1L166.0 311.8L164.8 310.0L163.4 308.0L162.2 306.0L161.0 304.1L160.0 302.3L159.0 300.6L158.0 298.7L157.0 296.8L156.0 294.9L155.0 293.0L153.9 291.0L152.8 289.0L151.7 287.0L150.6 285.0L149.6 283.0L148.6 281.0L147.7 279.0L146.8 277.0L146.0 274.9L145.0 272.1L144.3 270.0L143.7 268.0L143.0 265.1L142.5 263.0L142.0 260.7L141.4 258.0L141.0 256.0L140.3 253.0L139.8 251.0L139.0 248.4L138.1 246.0L137.2 244.0L136.1 242.0L135.2 240.0L134.4 238.0L133.7 236.0L133.0 233.6L132.3 231.0L131.8 229.0L131.1 226.0L130.7 224.0L130.1 221.0L129.7 219.0L129.1 216.0L128.8 214.0L128.3 211.0L128.0 209.0L127.6 206.0L127.4 203.0L127.2 200.0L127.3 197.0L127.4 194.0L127.7 191.0L128.0 189.0L128.6 186.0L129.2 184.0L130.0 181.5L130.9 179.0L131.8 177.0L132.8 175.0L133.9 173.0L135.0 171.2L136.0 169.7L137.2 168.0L138.8 166.0L140.0 164.7L141.6 163.0L143.0 161.6L144.8 160.0L146.1 159.0L148.0 157.5L150.0 156.1L151.8 155.0L153.5 154.0L155.4 153.0L157.4 152.0L159.6 151.0L162.0 150.0L164.0 149.3L166.0 148.6L168.0 148.0L171.0 147.1L173.0 146.6L175.5 146.0L178.0 145.5L180.4 145.0L183.0 144.6L186.0 144.1L188.0 143.9L191.0 143.5L194.0 143.1L196.0 142.8L199.0 142.3L201.0 141.9L204.0 141.4L206.8 141.0L209.0 140.7L212.0 140.4L215.0 140.1L217.0 139.9M220.0 169.0L223.0 168.9L226.0 168.9L228.0 169.1L231.0 169.4L234.0 169.8L236.0 170.2L239.0 170.9L241.0 171.4L243.2 172.0L246.0 172.9L248.0 173.6L250.0 174.3L252.0 175.1L254.2 176.0L256.4 177.0L258.5 178.0L260.5 179.0L262.3 180.0L264.0 181.0L266.0 182.3L268.0 183.8L269.5 185.0L271.0 186.4L272.6 188.0L274.0 189.7L275.0 191.1L276.3 193.0L277.4 195.0L278.4 197.0L279.3 199.0L280.0 201.0L281.0 204.0L281.5 206.0L282.0 208.3L282.5 211.0L282.9 214.0L283.1 216.0L283.4 219.0L283.6 222.0L283.8 225.0L284.0 227.0L284.4 230.0L284.9 233.0L285.2 235.0L285.7 238.0L286.0 240.4L286.3 243.0L286.3 246.0L286.3 249.0L286.2 252.0L286.0 255.0L285.9 257.0L285.8 260.0L285.6 263.0L285.4 266.0L285.2 269.0L285.0 271.5L284.8 274.0L284.4 277.0L284.0 280.0L283.6 282.0L283.0 285.0L282.5 287.0L281.9 289.0L281.0 292.0L280.2 294.0L279.4 296.0L278.5 298.0L277.3 300.0L276.1 302.0L275.0 303.5L273.7 305.0L272.0 306.9L270.8 308.0L269.0 309.4L267.0 310.7L265.0 311.7L263.0 312.4L261.0 313.0L258.0 313.7L255.3 314.0L253.0 314.1L250.0 314.2L247.0 314.2L244.0 314.1L242.0 314.0L239.0 313.7L236.0 313.4L233.1 313.0L231.0 312.7L228.0 312.2L226.0 311.8L223.0 311.3L220.0 311.0L218.0 310.8L215.0 310.4L212.7 310.0L210.0 309.4L208.0 308.9L205.3 308.0L203.0 307.1L201.0 306.1L199.0 305.0L197.5 304.0L196.0 302.8L194.2 301.0L193.0 299.7L191.6 298.0L190.1 296.0L189.0 294.4L188.0 292.9L186.9 291.0L185.8 289.0L184.7 287.0L183.7 285.0L182.7 283.0L181.8 281.0L181.0 279.0L180.0 276.7L179.0 274.2L178.2 272.0L177.5 270.0L176.8 268.0L176.0 265.0L175.6 263.0L175.3 260.0L175.1 257.0L174.9 255.0L174.6 252.0L174.1 249.0L173.6 247.0L172.9 245.0L172.0 242.8L171.0 240.4L170.0 238.1L169.0 236.0L168.2 234.0L167.3 232.0L166.5 230.0L165.7 228.0L165.0 226.0L164.1 223.0L163.6 221.0L163.0 218.3L162.6 216.0L162.1 213.0L161.9 211.0L161.7 208.0L161.6 205.0L161.6 202.0L161.8 199.0L162.1 197.0L162.7 194.0L163.2 192.0L164.0 190.0L165.0 188.0L166.2 186.0L167.7 184.0L169.0 182.5L170.5 181.0L172.0 179.7L174.0 178.2L176.0 177.0L178.0 176.1L180.0 175.3L182.0 174.7L184.6 174.0L187.0 173.5L189.3 173.0L192.0 172.5L195.0 172.1L197.0 171.8L200.0 171.4L203.0 171.0L205.0 170.7L208.0 170.2L210.0 170.0L213.0 169.6L216.0 169.2L219.0 169.0M220.0 201.9L223.0 201.8L226.0 201.9L228.0 202.2L231.0 202.8L233.0 203.5L235.0 204.3L237.0 205.3L239.0 206.5L240.9 208.0L242.0 209.0L243.8 211.0L245.0 212.7L246.0 214.4L247.0 216.6L247.8 219.0L248.2 221.0L248.7 224.0L248.8 227.0L248.7 230.0L248.4 233.0L248.0 235.2L247.4 238.0L246.9 240.0L246.2 243.0L245.8 245.0L245.5 248.0L245.4 251.0L245.2 254.0L245.0 256.0L244.4 259.0L244.0 261.0L243.3 264.0L242.7 266.0L242.0 268.0L241.0 270.3L240.0 272.1L238.7 274.0L237.0 276.0L236.0 277.0L234.0 278.7L232.0 280.0L230.0 281.0L228.0 281.6L225.2 282.0L224.0 282.0L221.2 281.0L219.9 280.0L218.0 278.0L217.0 276.8L215.7 275.0L214.1 273.0L213.0 271.6L211.8 270.0L210.5 268.0L209.5 266.0L208.6 264.0L207.8 262.0L207.0 259.1L206.6 257.0L206.1 254.0L205.9 252.0L205.5 249.0L205.0 246.8L204.0 244.7L203.0 242.8L202.0 241.0L200.9 239.0L199.8 237.0L199.0 235.0L198.3 232.0L198.0 229.6L197.9 227.0L198.1 225.0L198.5 222.0L199.0 219.5L199.7 217.0L200.5 215.0L201.5 213.0L202.8 211.0L204.0 209.4L205.4 208.0L207.0 206.7L209.0 205.3L211.0 204.3L213.0 203.5L215.0 202.8L218.0 202.2L220.0 201.9" fill="none" stroke="#3a2c00" stroke-opacity="0.62" stroke-width="0.7"/>
<path d="M227.1 111.1L228.7 86.5M227.1 111.1L209.2 106.0M227.1 111.1L246.5 105.9M227.1 111.1L213.5 125.6M227.1 111.1L241.6 126.2M227.1 111.1L227.0 126.0M226.0 139.7L225.6 168.9M226.0 139.7L213.5 125.6M226.0 139.7L241.6 126.2M226.0 139.7L199.7 153.6M226.0 139.7L253.3 153.8M226.0 139.7L227.0 126.0M225.6 168.9L222.0 201.8M225.6 168.9L199.7 153.6M225.6 168.9L253.3 153.8M225.6 168.9L179.7 196.9M225.6 168.9L264.4 190.8M222.0 201.8L179.7 196.9M222.0 201.8L264.4 190.8M222.0 201.8L212.5 224.2M222.0 201.8L236.6 222.2M221.5 246.0L205.2 247.4M221.5 246.0L245.7 245.2M221.5 246.0L212.5 224.2M221.5 246.0L236.6 222.2M221.5 246.0L236.6 264.8M221.5 246.0L214.2 264.5M222.2 281.6L223.0 311.3M222.2 281.6L260.9 295.6M222.2 281.6L236.6 264.8M222.2 281.6L214.2 264.5M222.2 281.6L189.2 267.6M222.2 281.6L184.4 297.8M223.0 311.3L224.1 342.3M223.0 311.3L261.2 348.8M223.0 311.3L185.6 349.9M223.0 311.3L260.9 295.6M223.0 311.3L184.4 297.8M224.1 342.3L224.3 366.4M224.1 342.3L261.2 348.8M224.1 342.3L242.3 366.9M224.1 342.3L185.6 349.9M224.1 342.3L205.1 367.6M224.3 366.4L223.7 384.7M224.3 366.4L242.3 366.9M224.3 366.4L205.1 367.6M70.5 244.6L106.7 248.0M70.5 244.6L109.9 205.3M70.5 244.6L89.7 262.2M106.7 248.0L138.2 246.3M106.7 248.0L109.9 205.3M106.7 248.0L89.7 262.2M106.7 248.0L109.3 280.0M138.2 246.3L173.7 247.4M138.2 246.3L109.9 205.3M138.2 246.3L109.3 280.0M138.2 246.3L179.7 196.9M138.2 246.3L156.2 277.0M173.7 247.4L205.2 247.4M173.7 247.4L179.7 196.9M173.7 247.4L212.5 224.2M173.7 247.4L189.2 267.6M173.7 247.4L156.2 277.0M205.2 247.4L212.5 224.2M205.2 247.4L214.2 264.5M205.2 247.4L189.2 267.6M245.7 245.2L286.3 242.9M245.7 245.2L236.6 222.2M245.7 245.2L264.4 225.5M245.7 245.2L265.8 266.3M245.7 245.2L236.6 264.8M286.3 242.9L316.4 243.0M286.3 242.9L264.4 225.5M286.3 242.9L301.2 211.0M286.3 242.9L301.2 273.8M286.3 242.9L265.8 266.3M316.4 243.0L342.8 243.0M316.4 243.0L336.7 204.7M316.4 243.0L334.7 278.5M316.4 243.0L301.2 211.0M316.4 243.0L301.2 273.8M342.8 243.0L371.8 243.1M342.8 243.0L336.7 204.7M342.8 243.0L354.4 224.1M342.8 243.0L353.8 260.3M342.8 243.0L334.7 278.5M371.8 243.1L354.4 224.1M371.8 243.1L353.8 260.3M228.7 86.5L209.2 106.0M228.7 86.5L246.5 105.9M223.7 384.7L242.3 366.9M223.7 384.7L205.1 367.6M209.2 106.0L189.3 125.8M209.2 106.0L213.5 125.6M189.3 125.8L150.0 165.2M189.3 125.8L213.5 125.6M189.3 125.8L199.7 153.6M150.0 165.2L109.9 205.3M150.0 165.2L199.7 153.6M150.0 165.2L179.7 196.9M109.9 205.3L179.7 196.9M246.5 105.9L264.7 125.9M246.5 105.9L241.6 126.2M264.7 125.9L300.3 164.9M264.7 125.9L241.6 126.2M264.7 125.9L253.3 153.8M300.3 164.9L336.7 204.7M300.3 164.9L253.3 153.8M300.3 164.9L264.4 190.8M300.3 164.9L301.2 211.0M336.7 204.7L354.4 224.1M336.7 204.7L301.2 211.0M353.8 260.3L334.7 278.5M334.7 278.5L298.1 313.5M334.7 278.5L301.2 273.8M298.1 313.5L261.2 348.8M298.1 313.5L301.2 273.8M298.1 313.5L260.9 295.6M261.2 348.8L242.3 366.9M261.2 348.8L260.9 295.6M89.7 262.2L109.3 280.0M109.3 280.0L147.7 315.2M109.3 280.0L156.2 277.0M147.7 315.2L185.6 349.9M147.7 315.2L184.4 297.8M147.7 315.2L156.2 277.0M185.6 349.9L205.1 367.6M185.6 349.9L184.4 297.8M213.5 125.6L199.7 153.6M213.5 125.6L227.0 126.0M241.6 126.2L253.3 153.8M241.6 126.2L227.0 126.0M199.7 153.6L179.7 196.9M253.3 153.8L264.4 190.8M179.7 196.9L212.5 224.2M264.4 190.8L236.6 222.2M264.4 190.8L264.4 225.5M264.4 190.8L301.2 211.0M212.5 224.2L236.6 222.2M236.6 222.2L264.4 225.5M264.4 225.5L301.2 211.0M301.2 273.8L265.8 266.3M301.2 273.8L260.9 295.6M265.8 266.3L260.9 295.6M265.8 266.3L236.6 264.8M260.9 295.6L236.6 264.8M236.6 264.8L214.2 264.5M214.2 264.5L189.2 267.6M189.2 267.6L184.4 297.8M189.2 267.6L156.2 277.0M184.4 297.8L156.2 277.0" fill="none" stroke="#f6ff14" stroke-opacity="0.9" stroke-width="0.95"/>
</g>
<polygon points="228.7,86.5 371.8,243.1 223.7,384.7 70.5,244.6" fill="none" stroke="#c8f01a" stroke-opacity="0.5" stroke-width="0.8"/>
<rect x="226.2" y="110.2" width="1.8" height="1.8" fill="#222"/>
<path d="M235.1 111.1h20" stroke="#3a3a3a" stroke-width="1"/>
<text transform="translate(235.4 109.5) scale(0.88 1)" font-size="8.5" font-weight="700" fill="#050505" stroke="#050505" stroke-width="0.25">1</text>
<text transform="translate(235.7 119.1) scale(0.95 1)" font-size="8.3" font-style="italic" fill="#2222d8" stroke="#2222d8" stroke-width="0.2">2,000</text>
<rect x="225.1" y="138.8" width="1.8" height="1.8" fill="#222"/>
<path d="M234.0 139.7h20" stroke="#3a3a3a" stroke-width="1"/>
<text transform="translate(234.3 138.1) scale(0.88 1)" font-size="8.5" font-weight="700" fill="#050505" stroke="#050505" stroke-width="0.25">2</text>
<text transform="translate(234.6 147.7) scale(0.95 1)" font-size="8.3" font-style="italic" fill="#2222d8" stroke="#2222d8" stroke-width="0.2">3,000</text>
<rect x="224.7" y="168.0" width="1.8" height="1.8" fill="#222"/>
<path d="M233.6 168.9h20" stroke="#3a3a3a" stroke-width="1"/>
<text transform="translate(233.9 167.3) scale(0.88 1)" font-size="8.5" font-weight="700" fill="#050505" stroke="#050505" stroke-width="0.25">3</text>
<text transform="translate(234.2 176.9) scale(0.95 1)" font-size="8.3" font-style="italic" fill="#2222d8" stroke="#2222d8" stroke-width="0.2">4,000</text>
<rect x="221.1" y="200.9" width="1.8" height="1.8" fill="#222"/>
<path d="M230.0 201.8h20" stroke="#3a3a3a" stroke-width="1"/>
<text transform="translate(230.3 200.2) scale(0.88 1)" font-size="8.5" font-weight="700" fill="#050505" stroke="#050505" stroke-width="0.25">4</text>
<text transform="translate(230.6 209.8) scale(0.95 1)" font-size="8.3" font-style="italic" fill="#2222d8" stroke="#2222d8" stroke-width="0.2">5,000</text>
<rect x="220.6" y="245.1" width="1.8" height="1.8" fill="#222"/>
<path d="M229.5 246.0h20" stroke="#3a3a3a" stroke-width="1"/>
<text transform="translate(229.8 244.4) scale(0.88 1)" font-size="8.5" font-weight="700" fill="#050505" stroke="#050505" stroke-width="0.25">5</text>
<text transform="translate(230.1 254.0) scale(0.95 1)" font-size="8.3" font-style="italic" fill="#2222d8" stroke="#2222d8" stroke-width="0.2">6,000</text>
<rect x="221.3" y="280.7" width="1.8" height="1.8" fill="#222"/>
<path d="M230.2 281.6h20" stroke="#3a3a3a" stroke-width="1"/>
<text transform="translate(230.5 280.0) scale(0.88 1)" font-size="8.5" font-weight="700" fill="#050505" stroke="#050505" stroke-width="0.25">6</text>
<text transform="translate(230.8 289.6) scale(0.95 1)" font-size="8.3" font-style="italic" fill="#2222d8" stroke="#2222d8" stroke-width="0.2">5,000</text>
<rect x="222.1" y="310.4" width="1.8" height="1.8" fill="#222"/>
<path d="M231.0 311.3h20" stroke="#3a3a3a" stroke-width="1"/>
<text transform="translate(231.3 309.7) scale(0.88 1)" font-size="8.5" font-weight="700" fill="#050505" stroke="#050505" stroke-width="0.25">7</text>
<text transform="translate(231.6 319.3) scale(0.95 1)" font-size="8.3" font-style="italic" fill="#2222d8" stroke="#2222d8" stroke-width="0.2">4,000</text>
<rect x="223.2" y="341.4" width="1.8" height="1.8" fill="#222"/>
<path d="M232.1 342.3h20" stroke="#3a3a3a" stroke-width="1"/>
<text transform="translate(232.4 340.7) scale(0.88 1)" font-size="8.5" font-weight="700" fill="#050505" stroke="#050505" stroke-width="0.25">8</text>
<text transform="translate(232.7 350.3) scale(0.95 1)" font-size="8.3" font-style="italic" fill="#2222d8" stroke="#2222d8" stroke-width="0.2">3,000</text>
<rect x="223.4" y="365.5" width="1.8" height="1.8" fill="#222"/>
<path d="M232.3 366.4h20" stroke="#3a3a3a" stroke-width="1"/>
<text transform="translate(232.6 364.8) scale(0.88 1)" font-size="8.5" font-weight="700" fill="#050505" stroke="#050505" stroke-width="0.25">9</text>
<text transform="translate(232.9 374.4) scale(0.95 1)" font-size="8.3" font-style="italic" fill="#2222d8" stroke="#2222d8" stroke-width="0.2">2,000</text>
<rect x="69.8" y="243.7" width="1.8" height="1.8" fill="#222"/>
<path d="M78.7 244.6h20" stroke="#3a3a3a" stroke-width="1"/>
<text transform="translate(79.0 243.0) scale(0.88 1)" font-size="8.5" font-weight="700" fill="#050505" stroke="#050505" stroke-width="0.25">10</text>
<text transform="translate(79.3 252.6) scale(0.95 1)" font-size="8.3" font-style="italic" fill="#2222d8" stroke="#2222d8" stroke-width="0.2">1,000</text>
<rect x="105.8" y="247.1" width="1.8" height="1.8" fill="#222"/>
<path d="M114.7 248.0h20" stroke="#3a3a3a" stroke-width="1"/>
<text transform="translate(115.0 246.4) scale(0.88 1)" font-size="8.5" font-weight="700" fill="#050505" stroke="#050505" stroke-width="0.25">11</text>
<text transform="translate(115.3 256.0) scale(0.95 1)" font-size="8.3" font-style="italic" fill="#2222d8" stroke="#2222d8" stroke-width="0.2">2,000</text>
<rect x="137.3" y="245.4" width="1.8" height="1.8" fill="#222"/>
<path d="M146.2 246.3h20" stroke="#3a3a3a" stroke-width="1"/>
<text transform="translate(146.5 244.7) scale(0.88 1)" font-size="8.5" font-weight="700" fill="#050505" stroke="#050505" stroke-width="0.25">12</text>
<text transform="translate(146.8 254.3) scale(0.95 1)" font-size="8.3" font-style="italic" fill="#2222d8" stroke="#2222d8" stroke-width="0.2">3,000</text>
<rect x="172.8" y="246.5" width="1.8" height="1.8" fill="#222"/>
<path d="M181.7 247.4h20" stroke="#3a3a3a" stroke-width="1"/>
<text transform="translate(182.0 245.8) scale(0.88 1)" font-size="8.5" font-weight="700" fill="#050505" stroke="#050505" stroke-width="0.25">13</text>
<text transform="translate(182.3 255.4) scale(0.95 1)" font-size="8.3" font-style="italic" fill="#2222d8" stroke="#2222d8" stroke-width="0.2">4,000</text>
<rect x="204.3" y="246.5" width="1.8" height="1.8" fill="#222"/>
<path d="M213.2 247.4h20" stroke="#3a3a3a" stroke-width="1"/>
<text transform="translate(213.5 245.8) scale(0.88 1)" font-size="8.5" font-weight="700" fill="#050505" stroke="#050505" stroke-width="0.25">14</text>
<text transform="translate(213.8 255.4) scale(0.95 1)" font-size="8.3" font-style="italic" fill="#2222d8" stroke="#2222d8" stroke-width="0.2">5,000</text>
<rect x="244.8" y="244.3" width="1.8" height="1.8" fill="#222"/>
<path d="M253.7 245.2h20" stroke="#3a3a3a" stroke-width="1"/>
<text transform="translate(254.0 243.6) scale(0.88 1)" font-size="8.5" font-weight="700" fill="#050505" stroke="#050505" stroke-width="0.25">15</text>
<text transform="translate(254.3 253.2) scale(0.95 1)" font-size="8.3" font-style="italic" fill="#2222d8" stroke="#2222d8" stroke-width="0.2">5,000</text>
<rect x="285.4" y="242.0" width="1.8" height="1.8" fill="#222"/>
<path d="M294.3 242.9h20" stroke="#3a3a3a" stroke-width="1"/>
<text transform="translate(294.6 241.3) scale(0.88 1)" font-size="8.5" font-weight="700" fill="#050505" stroke="#050505" stroke-width="0.25">16</text>
<text transform="translate(294.9 250.9) scale(0.95 1)" font-size="8.3" font-style="italic" fill="#2222d8" stroke="#2222d8" stroke-width="0.2">4,000</text>
<rect x="315.5" y="242.1" width="1.8" height="1.8" fill="#222"/>
<path d="M324.4 243.0h20" stroke="#3a3a3a" stroke-width="1"/>
<text transform="translate(324.7 241.4) scale(0.88 1)" font-size="8.5" font-weight="700" fill="#050505" stroke="#050505" stroke-width="0.25">17</text>
<text transform="translate(325.0 251.0) scale(0.95 1)" font-size="8.3" font-style="italic" fill="#2222d8" stroke="#2222d8" stroke-width="0.2">3,000</text>
<rect x="341.9" y="242.1" width="1.8" height="1.8" fill="#222"/>
<path d="M350.8 243.0h20" stroke="#3a3a3a" stroke-width="1"/>
<text transform="translate(351.1 241.4) scale(0.88 1)" font-size="8.5" font-weight="700" fill="#050505" stroke="#050505" stroke-width="0.25">18</text>
<text transform="translate(351.4 251.0) scale(0.95 1)" font-size="8.3" font-style="italic" fill="#2222d8" stroke="#2222d8" stroke-width="0.2">2,000</text>
<rect x="370.9" y="242.2" width="1.8" height="1.8" fill="#222"/>
<path d="M381.3 243.1h20" stroke="#3a3a3a" stroke-width="1"/>
<text transform="translate(381.6 241.5) scale(0.88 1)" font-size="8.5" font-weight="700" fill="#050505" stroke="#050505" stroke-width="0.25">19</text>
<text transform="translate(381.9 251.1) scale(0.95 1)" font-size="8.3" font-style="italic" fill="#2222d8" stroke="#2222d8" stroke-width="0.2">1,000</text>
<rect x="227.8" y="85.6" width="1.8" height="1.8" fill="#222"/>
<path d="M236.7 86.5h20" stroke="#3a3a3a" stroke-width="1"/>
<text transform="translate(237.0 84.9) scale(0.88 1)" font-size="8.5" font-weight="700" fill="#050505" stroke="#050505" stroke-width="0.25">20</text>
<text transform="translate(237.3 94.5) scale(0.95 1)" font-size="8.3" font-style="italic" fill="#2222d8" stroke="#2222d8" stroke-width="0.2">1,000</text>
<rect x="222.8" y="383.8" width="1.8" height="1.8" fill="#222"/>
<path d="M231.7 384.7h20" stroke="#3a3a3a" stroke-width="1"/>
<text transform="translate(232.0 383.1) scale(0.88 1)" font-size="8.5" font-weight="700" fill="#050505" stroke="#050505" stroke-width="0.25">21</text>
<text transform="translate(232.3 392.7) scale(0.95 1)" font-size="8.3" font-style="italic" fill="#2222d8" stroke="#2222d8" stroke-width="0.2">1,000</text>
</svg>
<div class="b" style="left:372.2px;top:263.3px;width:209.6px;height:198px;background:#f0f0f0;border:0.8px solid #8f8f8f;box-shadow:0 2px 7px rgba(0,0,0,0.35);"></div>
<div class="b" style="left:373px;top:264px;width:208px;height:18.4px;background:#fff;"></div>
<svg width="671" height="607"><path d="M379.6 272.4 L383 271 L386.4 272.4 L383 273.8 Z" fill="#9aa0a6"/><path d="M379.6 272.4 L383 273.8 L386.4 272.4 L383 274.5 Z" fill="#7d858c"/><path d="M568 269.3l5.6 5.6M573.600 269.3l-5.600 5.6" stroke="#222" stroke-width="0.8"/></svg>
<span class="t " style="left:391.0px;top:267.6px;font-size:7.7px;color:#1a1a1a;transform:scaleX(0.928);transform-origin:left center;-webkit-text-stroke:0.18px #1a1a1a;">Метод естественного соседа - КРЕДО АНАЛИЗ ...</span>
<div class="b" style="left:380.5px;top:288.9px;width:193px;height:148px;background:#fff;border:0.8px solid #a6a6a6;"></div>
<span class="t " style="left:383.0px;top:291.8px;font-size:7.7px;color:#111;transform:scaleX(0.901);transform-origin:left center;-webkit-text-stroke:0.18px #111;">Параметр</span>
<span class="t " style="left:462.8px;top:291.8px;font-size:7.7px;color:#111;transform:scaleX(0.937);transform-origin:left center;-webkit-text-stroke:0.18px #111;">Значение</span>
<div class="b" style="left:381.3px;top:303.5px;width:191.4px;height:0.7px;background:#dcdcdc;"></div>
<div class="b" style="left:381.3px;top:303.9px;width:191.4px;height:13.7px;background:#f0f0f0;"></div>
<div class="b" style="left:381.3px;top:317.6px;width:191.4px;height:14.7px;background:#f0f0f0;"></div>
<div class="b" style="left:381.3px;top:332.3px;width:78.6px;height:13.9px;background:#f0f0f0;"></div>
<div class="b" style="left:381.3px;top:317.3px;width:191.4px;height:0.7px;background:#dcdcdc;"></div>
<div class="b" style="left:381.3px;top:332px;width:191.4px;height:0.7px;background:#dcdcdc;"></div>
<div class="b" style="left:381.3px;top:346px;width:191.4px;height:0.7px;background:#dcdcdc;"></div>
<div class="b" style="left:459.6px;top:289.7px;width:0.8px;height:56.6px;background:#dcdcdc;"></div>
<div class="b" style="left:380.9px;top:303.7px;width:79.4px;height:14.1px;border:0.9px solid #333;"></div>
<span class="t " style="left:382.7px;top:305.8px;font-size:7.7px;color:#111;transform:scaleX(0.955);transform-origin:left center;-webkit-text-stroke:0.18px #111;">размеры (м)</span>
<span class="t " style="left:382.7px;top:320.5px;font-size:7.7px;color:#111;transform:scaleX(0.960);transform-origin:left center;-webkit-text-stroke:0.18px #111;">размеры матрицы</span>
<span class="t " style="left:382.7px;top:334.8px;font-size:7.7px;color:#111;transform:scaleX(0.981);transform-origin:left center;-webkit-text-stroke:0.18px #111;">шаг матрицы (м)</span>
<span class="t " style="left:462.8px;top:305.8px;font-size:7.7px;color:#111;transform:scaleX(0.868);transform-origin:left center;-webkit-text-stroke:0.18px #111;">105.0 x 103.7</span>
<span class="t " style="left:462.8px;top:320.5px;font-size:7.7px;color:#111;transform:scaleX(0.861);transform-origin:left center;-webkit-text-stroke:0.18px #111;">1049 x 1036</span>
<span class="t " style="left:462.8px;top:334.8px;font-size:7.7px;color:#111;transform:scaleX(0.856);transform-origin:left center;-webkit-text-stroke:0.18px #111;">0,100</span>
<div class="b" style="left:478px;top:441px;width:45px;height:12.8px;background:#e1e1e1;border:1px solid #0078d7;"></div>
<div class="b" style="left:528.3px;top:441px;width:44px;height:12.8px;background:#e1e1e1;border:0.8px solid #adadad;"></div>
<span class="t " style="left:494.9px;top:442.5px;font-size:7.7px;color:#111;transform:scaleX(0.854);transform-origin:center center;-webkit-text-stroke:0.18px #111;">OK</span>
<span class="t " style="left:536.5px;top:442.5px;font-size:7.7px;color:#111;transform:scaleX(0.923);transform-origin:center center;-webkit-text-stroke:0.18px #111;">Отмена</span>
</div></body></html>
